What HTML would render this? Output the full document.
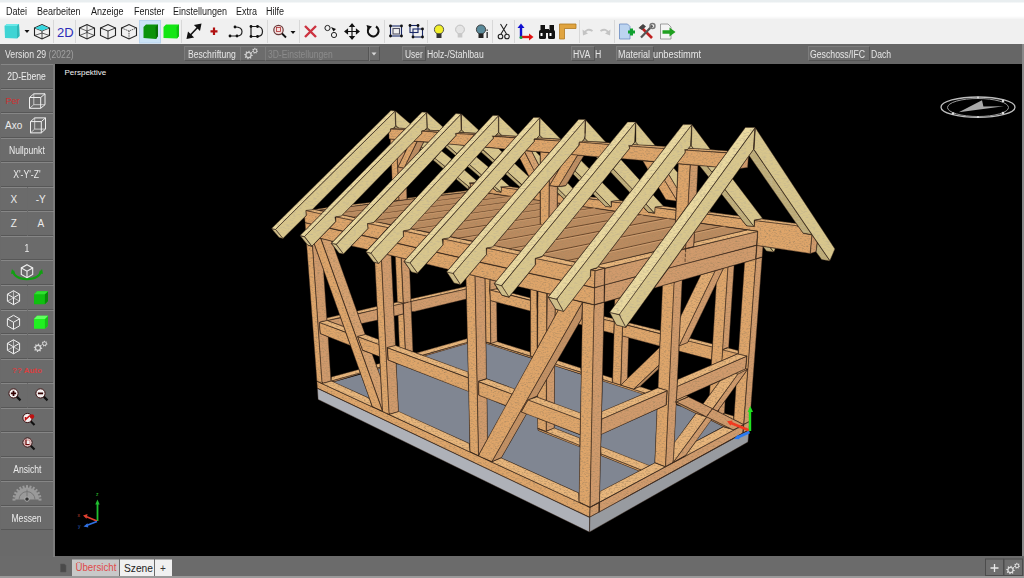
<!DOCTYPE html>
<html><head><meta charset="utf-8">
<style>
html,body{margin:0;padding:0;width:1024px;height:578px;overflow:hidden;background:#6a6a6a;font-family:"Liberation Sans",sans-serif}
.a{position:absolute;white-space:nowrap}
#menu{position:absolute;left:0;top:0;width:1024px;height:19px;background:linear-gradient(#e9eef0 0,#e9eef0 2px,#ffffff 3px,#ffffff 16px,#f3f3f3 19px)}
#menu span{position:absolute;top:5.5px;font-size:10px;line-height:12px;color:#1b1b1b;transform-origin:0 0;transform:scaleX(0.9)}
#tool{position:absolute;left:0;top:19px;width:1024px;height:25px;background:#f0f0f0}
.sep{position:absolute;top:22px;width:1px;height:20px;background:#d6d6d6}
#info{position:absolute;left:0;top:44px;width:1024px;height:20px;background:#666666}
.ib{position:absolute;top:2px;height:13px;border:1px solid #555;border-top-color:#7c7c7c;border-left-color:#7c7c7c;background:#6c6c6c;color:#e8e8e8;font-size:10px;line-height:13px;padding:0 2px}
.it{position:absolute;top:3.5px;color:#e6e6e6;font-size:10px;line-height:13px;white-space:nowrap;transform-origin:0 0}
#side{position:absolute;left:0;top:64px;width:55px;height:493px;background:#6a6a6a}
.btn{position:absolute;left:1px;width:52px;height:22.55px;border-top:1px solid #868686;border-bottom:1px solid #575757;background:#6b6b6b;color:#ececec;font-size:10px;text-align:center;line-height:23.5px}
.half{width:25.5px}
#view{position:absolute;left:55px;top:64px;width:967px;height:492px;background:#000}
#right{position:absolute;left:1022px;top:44px;width:2px;height:534px;background:#8a8a8a}
#bottom{position:absolute;left:0;top:556px;width:1024px;height:22px;background:#6b6b6b}
.tab{position:absolute;top:4px;height:16px;font-size:10px;line-height:16px;text-align:center}
</style></head><body>
<div id="menu">
<span style="left:5.5px">Datei</span><span style="left:37px">Bearbeiten</span><span style="left:91px">Anzeige</span><span style="left:134px">Fenster</span><span style="left:172.5px">Einstellungen</span><span style="left:236px">Extra</span><span style="left:266px">Hilfe</span>
</div>
<div id="tool"></div>
<svg width="1024" height="25" style="position:absolute;left:0;top:19px" viewBox="0 19 1024 25">
<g fill="#d8d8d8"><rect x="53" y="20" width="1" height="23"/><rect x="75" y="20" width="1" height="23"/><rect x="181" y="20" width="1" height="23"/><rect x="267" y="20" width="1" height="23"/><rect x="299" y="20" width="1" height="23"/><rect x="384" y="20" width="1" height="23"/><rect x="427" y="20" width="1" height="23"/><rect x="492" y="20" width="1" height="23"/><rect x="514" y="20" width="1" height="23"/><rect x="579" y="20" width="1" height="23"/><rect x="614" y="20" width="1" height="23"/></g>
<!-- cyan cube -->
<path d="M4.5 26 L7 24 L19 24 L19.5 36 L17 38.5 L5 38 Z" fill="#3fd4d4"/><path d="M4.5 26 L7 24 L19 24 L17 26 Z" fill="#6ae8e8"/><path d="M17 26 L19 24 L19.5 36 L17 38.5Z" fill="#30b8b8"/>
<path d="M24.5 30 L29.5 30 L27 33 Z" fill="#111"/>
<!-- wire cube cyan top -->
<g fill="none" stroke="#222" stroke-width="1.1"><path d="M34.5 28 L42 24.5 L49.5 28 L49.5 35.5 L42 39 L34.5 35.5 Z"/><path d="M34.5 28 L42 31 L49.5 28 M42 31 L42 39" stroke-width="0.8"/><path d="M34.5 35.5 L42 33 L49.5 35.5" stroke-width="0.7"/></g>
<path d="M35 28 L42 25 L49 28 L42 30.5Z" fill="#35d8e0"/>
<text x="57" y="36.5" font-family="Liberation Sans" font-size="13" fill="#2b2bb8">2D</text>
<g fill="none" stroke="#222" stroke-width="1.1">
<path d="M79.5 28 L87 24.5 L94.5 28 L94.5 35.5 L87 39 L79.5 35.5 Z"/><path d="M79.5 28 L87 31 L94.5 28 M87 31 L87 39 M79.5 35.5 L87 32.5 L94.5 35.5 M87 24.5 L87 32.5" stroke-width="0.7"/>
<path d="M100.5 28 L108 24.5 L115.5 28 L115.5 35.5 L108 39 L100.5 35.5 Z"/><path d="M100.5 28 L108 31 L115.5 28 M108 31 L108 39" stroke-width="0.9"/>
<path d="M121.5 28 L129 24.5 L136.5 28 L136.5 35.5 L129 39 L121.5 35.5 Z"/><path d="M121.5 28 L129 31 L136.5 28 M129 31 L129 39" stroke-width="0.9" stroke-dasharray="1.2 1"/>
</g>
<rect x="139.5" y="20.5" width="21" height="22.5" fill="#cce4f7" stroke="#b8d4ee" stroke-width="1"/>
<path d="M143.5 27 L146 24.5 L158 24.5 L158 36 L156 39 L143.5 38 Z" fill="#0b930b"/><path d="M155.5 27 L158 24.5 L158 36 L156 39Z" fill="#087008"/>
<path d="M163.5 27 L166 24.5 L179 24.5 L179 36 L177 38.5 L163.5 38 Z" fill="#14e614"/><path d="M176.5 27 L179 24.5 L179 36 L177 38.5Z" fill="#10c010"/>
<!-- diag arrow -->
<g stroke="#111" stroke-width="1.6" fill="#111"><path d="M189.5 36 L198.5 26.5" fill="none"/><path d="M187.5 38 L188.5 33 L192.5 37Z"/><path d="M200.5 24.5 L195.5 25.5 L199.5 29.5Z"/></g>
<path d="M214 27.5 V35 M210.5 31.3 H217.5" stroke="#b01010" stroke-width="2.2"/>
<g stroke="#222" stroke-width="1.2" fill="none"><path d="M230 36 H237 M235 27 Q242 27 242 31.5 Q242 36 237 36"/><path d="M251 26.5 V36.5 M251 26.5 H257 Q262.5 26.5 262.5 31.5 Q262.5 36.5 257 36.5 H251"/></g>
<g fill="#111"><circle cx="230" cy="36" r="1.4"/><circle cx="237" cy="36" r="1.4"/><circle cx="235" cy="27" r="1.4"/><circle cx="251" cy="26.5" r="1.4"/><circle cx="257.5" cy="26.5" r="1.4"/><circle cx="251" cy="36.5" r="1.4"/><circle cx="257.5" cy="36.5" r="1.4"/></g>
<!-- zoom -->
<circle cx="278.5" cy="30" r="4.7" fill="#f4dede" stroke="#6a3a3a" stroke-width="1.2"/><path d="M282 33.5 L286 37.5" stroke="#111" stroke-width="1.8"/><rect x="276.5" y="27.5" width="4" height="4" fill="none" stroke="#b03030" stroke-width="0.8"/>
<path d="M290.5 31 L295.5 31 L293 34 Z" fill="#111"/>
<path d="M305 26 L316 37 M316 26 L305 37" stroke="#cc3340" stroke-width="2.4"/>
<g fill="none" stroke="#222" stroke-width="1"><circle cx="327.5" cy="28" r="2.6"/><circle cx="334" cy="35" r="2.6"/></g><path d="M331 27 L336 29 L333.5 31.5Z" fill="#111"/>
<g stroke="#111" stroke-width="1.2" fill="#111"><path d="M352 24.5 V38.5 M345.5 31.5 H358.5" fill="none"/><path d="M352 24 L350 26.5 H354Z M352 39 L350 36.5 H354Z M345 31.5 L347.5 29.5 V33.5Z M359 31.5 L356.5 29.5 V33.5Z"/></g>
<path d="M376 26.5 A5.3 5.3 0 1 1 368.5 28.5" fill="none" stroke="#111" stroke-width="2.2"/><path d="M366.5 25 L372 26.5 L368 30.5Z" fill="#111"/>
<g fill="none" stroke="#1b2a6a" stroke-width="1.1"><rect x="390.5" y="26" width="11" height="10"/><rect x="393" y="28.5" width="6.5" height="5.5" stroke="#556"/></g><g fill="#111"><circle cx="390.5" cy="26" r="1.4"/><circle cx="401.5" cy="26" r="1.4"/><circle cx="390.5" cy="36" r="1.4"/><circle cx="401.5" cy="36" r="1.4"/></g>
<g fill="none" stroke="#1b2a6a" stroke-width="1.1"><rect x="410" y="25.5" width="8" height="7"/><rect x="413" y="29" width="9.5" height="8"/></g><g fill="#111"><circle cx="410" cy="25.5" r="1.4"/><circle cx="418" cy="25.5" r="1.4"/><circle cx="413" cy="37" r="1.4"/><circle cx="422.5" cy="37" r="1.4"/><circle cx="422.5" cy="29" r="1.4"/></g>
<!-- bulbs -->
<circle cx="439" cy="29.5" r="4.6" fill="#f2f02a" stroke="#444" stroke-width="0.9"/><rect x="436.5" y="33.5" width="5" height="4.5" fill="#333"/>
<circle cx="460" cy="29.5" r="4.4" fill="#e4e4e4" stroke="#bbb" stroke-width="0.9"/><rect x="457.7" y="33.5" width="4.6" height="4" fill="#c8c8c8"/>
<circle cx="481" cy="29.5" r="4.6" fill="#5a8a9a" stroke="#333" stroke-width="0.9"/><rect x="478.5" y="33.5" width="5" height="4.5" fill="#222"/><rect x="486.5" y="32" width="1.3" height="6" fill="#222"/><rect x="486.5" y="29.5" width="1.3" height="1.3" fill="#222"/>
<!-- scissors -->
<g fill="none" stroke="#222" stroke-width="1.1"><path d="M500.5 24 L506.5 34 M507 24 L501 34"/><circle cx="500.5" cy="36.5" r="2.3"/><circle cx="507" cy="36.5" r="2.3"/></g>
<!-- axes -->
<path d="M521 37.5 V26" stroke="#1010d0" stroke-width="2.4"/><path d="M521 23.5 L517.5 28 H524.5Z" fill="#1010d0"/><path d="M521 37 H530" stroke="#e01010" stroke-width="2.4"/><path d="M533.5 37 L529 33.5 V40.5Z" fill="#e01010"/><circle cx="521" cy="37.5" r="1.5" fill="#10a040"/>
<!-- binoculars -->
<g fill="#111"><rect x="539" y="30" width="7" height="9" rx="1.5"/><rect x="548" y="30" width="7" height="9" rx="1.5"/><rect x="540.5" y="25" width="4.5" height="6"/><rect x="549.5" y="25" width="4.5" height="6"/><rect x="545" y="29" width="4" height="4"/></g><g fill="#fff"><rect x="540.5" y="33" width="2" height="3"/><rect x="549.5" y="33" width="2" height="3"/></g>
<!-- ruler -->
<path d="M559.5 24 H576 V28.5 H564.5 V39 H559.5 Z" fill="#e0a440" stroke="#b07820" stroke-width="0.8"/>
<!-- undo/redo gray -->
<path d="M584 33.5 Q587 27.5 592.5 31" fill="none" stroke="#c4c4c4" stroke-width="2"/><path d="M582.5 29.5 L583 35.5 L588 33.5Z" fill="#c4c4c4"/>
<path d="M609 33.5 Q606 27.5 600.5 31" fill="none" stroke="#c4c4c4" stroke-width="2"/><path d="M610.5 29.5 L610 35.5 L605 33.5Z" fill="#c4c4c4"/>
<!-- doc+ -->
<path d="M619.5 24 H627.5 L630 26.5 V39 H619.5Z" fill="#bcd4f0" stroke="#6a8ac0" stroke-width="0.8"/><path d="M628 32 H635 M631.5 28.5 V35.5" stroke="#10a030" stroke-width="3"/>
<!-- tools -->
<path d="M640.5 26.5 L652 38" stroke="#c02020" stroke-width="2.6"/><path d="M652.5 25.5 L641 37.5" stroke="#555" stroke-width="2.2"/><path d="M638.5 28 L643 24 L646 26.5 L642 30Z" fill="#444"/><circle cx="652.5" cy="26" r="2.5" fill="none" stroke="#777" stroke-width="1.4"/>
<!-- doc arrow -->
<path d="M660.5 24 H668 L671 27 V39 H660.5Z" fill="#f4f4f4" stroke="#888" stroke-width="0.8"/><path d="M662.5 32 H670" stroke="#20a020" stroke-width="3.5"/><path d="M675.5 32 L669.5 27.5 V36.5Z" fill="#20a020"/>
</svg>

<div id="info">
<div class="ib" style="left:184px;width:51px"></div>
<div class="ib" style="left:240px;width:20px"></div>
<div class="ib" style="left:265px;width:109px"></div><div style="position:absolute;left:368px;top:3px;width:1px;height:14px;background:#555"></div><div style="position:absolute;left:369px;top:3px;width:1px;height:14px;background:#7a7a7a"></div>
<svg style="position:absolute;left:370px;top:7px" width="8" height="6"><path d="M1.5 1.5 H6.5 L4 4.5Z" fill="#d8d8d8"/></svg>
<svg style="position:absolute;left:243px;top:2px" width="20" height="16"><path d="M9.79 9.21 9.67 10.04 8.30 10.32 7.99 10.84 8.39 12.19 7.71 12.69 6.54 11.92 5.95 12.06 5.29 13.29 4.46 13.17 4.18 11.80 3.66 11.49 2.31 11.89 1.81 11.21 2.58 10.04 2.44 9.45 1.21 8.79 1.33 7.96 2.70 7.68 3.01 7.16 2.61 5.81 3.29 5.31 4.46 6.08 5.05 5.94 5.71 4.71 6.54 4.83 6.82 6.20 7.34 6.51 8.69 6.11 9.19 6.79 8.42 7.96 8.56 8.55Z" fill="#cfcfcf"/><circle cx="5.50" cy="9.00" r="1.94" fill="#6c6c6c"/><path d="M15.00 4.97 14.88 5.63 13.89 5.84 13.61 6.24 13.74 7.25 13.15 7.57 12.36 6.93 11.88 6.96 11.17 7.68 10.55 7.43 10.56 6.41 10.24 6.05 9.23 5.95 9.04 5.30 9.84 4.68 9.92 4.20 9.37 3.35 9.76 2.80 10.75 3.04 11.17 2.80 11.50 1.84 12.17 1.80 12.60 2.72 13.04 2.91 14.00 2.56 14.45 3.06 14.00 3.97 14.13 4.44Z" fill="#cfcfcf"/><circle cx="12.00" cy="4.80" r="1.35" fill="#6c6c6c"/></svg>
<div class="ib" style="left:402px;width:18px"></div>
<div class="ib" style="left:571px;width:18px"></div>
<div class="ib" style="left:616px;width:32px"></div>
<div class="ib" style="left:808px;width:56px"></div>
<span class="it" style="left:5px;transform:scaleX(0.87)">Version 29 <span style="color:#a0a0a0">(2022)</span></span>
<span class="it" style="left:188px;transform:scaleX(0.86)">Beschriftung</span>
<span class="it" style="left:268px;transform:scaleX(0.85);color:#8c8c8c">3D-Einstellungen</span>
<span class="it" style="left:405px;transform:scaleX(0.84)">User</span>
<span class="it" style="left:427px;transform:scaleX(0.865)">Holz-/Stahlbau</span>
<span class="it" style="left:573px;transform:scaleX(0.87)">HVA</span>
<span class="it" style="left:594.5px;transform:scaleX(0.87)">H</span>
<span class="it" style="left:618px;transform:scaleX(0.9)">Material</span>
<span class="it" style="left:653px;transform:scaleX(0.93)">unbestimmt</span>
<span class="it" style="left:810px;transform:scaleX(0.87)">Geschoss/IFC</span>
<span class="it" style="left:870.5px;transform:scaleX(0.86)">Dach</span>
</div>
<div id="side"><div class="btn" style="top:0.0px"><span style="display:inline-block;transform:scaleX(0.86)">2D-Ebene</span></div><div class="btn" style="top:24.6px"><span style="display:inline-block;transform:scaleX(0.86)"></span></div><div class="btn" style="top:49.1px"><span style="display:inline-block;transform:scaleX(0.86)"></span></div><div class="btn" style="top:73.7px"><span style="display:inline-block;transform:scaleX(0.86)">Nullpunkt</span></div><div class="btn" style="top:98.2px"><span style="display:inline-block;transform:scaleX(0.86)">X'-Y'-Z'</span></div><div class="btn half" style="top:122.8px;left:1px">X</div><div class="btn half" style="top:122.8px;left:28px">-Y</div><div class="btn half" style="top:147.3px;left:1px">Z</div><div class="btn half" style="top:147.3px;left:28px">A</div><div class="btn" style="top:171.8px"><span style="display:inline-block;transform:scaleX(0.86)">1</span></div><div class="btn" style="top:196.4px"><span style="display:inline-block;transform:scaleX(0.86)"></span></div><div class="btn half" style="top:221.0px;left:1px"></div><div class="btn half" style="top:221.0px;left:28px"></div><div class="btn half" style="top:245.5px;left:1px"></div><div class="btn half" style="top:245.5px;left:28px"></div><div class="btn half" style="top:270.1px;left:1px"></div><div class="btn half" style="top:270.1px;left:28px"></div><div class="btn" style="top:294.6px"><span style="display:inline-block;transform:scaleX(0.86)"></span></div><div class="btn half" style="top:319.2px;left:1px"></div><div class="btn half" style="top:319.2px;left:28px"></div><div class="btn" style="top:343.7px"><span style="display:inline-block;transform:scaleX(0.86)"></span></div><div class="btn" style="top:368.2px"><span style="display:inline-block;transform:scaleX(0.86)"></span></div><div class="btn" style="top:392.8px"><span style="display:inline-block;transform:scaleX(0.86)">Ansicht</span></div><div class="btn" style="top:417.4px"><span style="display:inline-block;transform:scaleX(0.86)"></span></div><div class="btn" style="top:441.9px"><span style="display:inline-block;transform:scaleX(0.86)">Messen</span></div><svg width="56" height="493" viewBox="0 64 56 493" style="position:absolute;left:0;top:0"><text x="5.5" y="103.8" font-size="9" fill="#d03030" font-family="Liberation Sans">Per</text><g fill="none" stroke="#f0f0f0" stroke-width="1.00"><path d="M29.5 97.5H40.7V108.3H29.5Z"/><path d="M29.5 97.5L33.8 93.8H45.0L40.7 97.5 M45.0 93.8L45.0 93.8V104.7L40.7 108.3"/><path d="M33.8 93.8V104.7H45.0 M33.8 104.7L29.5 108.3" stroke-width="0.70"/></g><text x="5" y="128.9" font-size="10" fill="#ececec" font-family="Liberation Sans">Axo</text><g fill="none" stroke="#f0f0f0" stroke-width="1.00"><path d="M30.5 121.6H41.3V132.9H30.5Z"/><path d="M30.5 121.6L34.7 117.9H45.5L41.3 121.6 M45.5 117.9L45.5 117.9V129.1L41.3 132.9"/><path d="M34.7 117.9V129.1H45.5 M34.7 129.1L30.5 132.9" stroke-width="0.70"/></g><path d="M13 270.7 Q14 278.7 27 279.2 Q40 278.7 41 270.7" fill="none" stroke="#10a010" stroke-width="2.2"/><path d="M12 268.7 L14.5 273.7 L11 273.7 Z M42 268.7 L39.5 273.7 L43 273.7 Z" fill="#10a010"/><g fill="none" stroke="#f0f0f0" stroke-width="1.10"><path d="M27.0 264.7L32.7 267.9L32.7 274.4L27.0 277.7L21.3 274.4L21.3 267.9Z"/><path d="M21.3 267.9L27.0 271.2L32.7 267.9 M27.0 271.2V277.7"/></g><g fill="none" stroke="#f0f0f0" stroke-width="1.00"><path d="M13.5 290.7L19.6 294.2L19.6 301.2L13.5 304.7L7.4 301.2L7.4 294.2Z"/><path d="M7.4 294.2L13.5 297.7L19.6 294.2 M13.5 297.7V304.7"/><path d="M13.5 290.7V297.8 M7.4 301.2L13.5 297.8L19.6 301.2" stroke-width="0.60"/></g><path d="M34.0 294.3L37.1 291.2H48.0V301.1L44.9 304.2H34.0Z" fill="#10c010"/><path d="M44.9 294.3L48.0 291.2V301.1L44.9 304.2Z" fill="#0a8a0a"/><path d="M34.0 294.3L37.1 291.2H48.0L44.9 294.3Z" fill="#30e030"/><g fill="none" stroke="#f0f0f0" stroke-width="1.00"><path d="M13.5 315.3L19.6 318.8L19.6 325.8L13.5 329.3L7.4 325.8L7.4 318.8Z"/><path d="M7.4 318.8L13.5 322.3L19.6 318.8 M13.5 322.3V329.3"/></g><path d="M34.0 318.9L37.1 315.8H48.0V325.7L44.9 328.8H34.0Z" fill="#20f020"/><path d="M44.9 318.9L48.0 315.8V325.7L44.9 328.8Z" fill="#18c018"/><path d="M34.0 318.9L37.1 315.8H48.0L44.9 318.9Z" fill="#60ff60"/><g fill="none" stroke="#f0f0f0" stroke-width="1.00"><path d="M13.5 339.8L19.6 343.3L19.6 350.3L13.5 353.8L7.4 350.3L7.4 343.3Z"/><path d="M7.4 343.3L13.5 346.8L19.6 343.3 M13.5 346.8V353.8"/><path d="M13.5 339.8V346.9 M7.4 350.3L13.5 346.9L19.6 350.3" stroke-width="0.60"/></g><path d="M42.29 348.04 42.17 348.87 40.80 349.15 40.49 349.67 40.89 351.01 40.21 351.51 39.04 350.74 38.45 350.89 37.79 352.12 36.96 352.00 36.68 350.62 36.16 350.31 34.81 350.71 34.31 350.04 35.08 348.87 34.94 348.28 33.71 347.61 33.83 346.78 35.20 346.50 35.51 345.98 35.11 344.64 35.79 344.14 36.96 344.91 37.55 344.76 38.21 343.53 39.04 343.65 39.32 345.03 39.84 345.34 41.19 344.94 41.69 345.61 40.92 346.78 41.06 347.37Z" fill="#d4d4d4"/><circle cx="38.00" cy="347.82" r="1.94" fill="#6b6b6b"/><path d="M47.50 343.79 47.38 344.46 46.39 344.67 46.11 345.06 46.24 346.07 45.65 346.40 44.86 345.75 44.38 345.78 43.67 346.51 43.05 346.25 43.06 345.24 42.74 344.87 41.73 344.77 41.54 344.13 42.34 343.50 42.42 343.03 41.87 342.17 42.26 341.63 43.25 341.86 43.67 341.63 44.00 340.67 44.67 340.63 45.10 341.55 45.54 341.73 46.50 341.39 46.95 341.89 46.50 342.80 46.63 343.26Z" fill="#d4d4d4"/><circle cx="44.50" cy="343.62" r="1.35" fill="#6b6b6b"/><text x="12" y="373.4" font-size="8" fill="#d84040" font-family="Liberation Sans" font-weight="bold">?? Auto</text><path d="M16.5 396.4L20.5 400.4" stroke="#111" stroke-width="2.2"/><circle cx="13.5" cy="393.4" r="4.6" fill="#f4f0f0" stroke="#3a1010" stroke-width="1"/><path d="M10.9 393.4H16.1M13.5 390.8V396.0" stroke="#300" stroke-width="1.8"/><path d="M43.5 396.4L47.5 400.4" stroke="#111" stroke-width="2.2"/><circle cx="40.5" cy="393.4" r="4.6" fill="#f4f0f0" stroke="#3a1010" stroke-width="1"/><path d="M37.9 393.4H43.1" stroke="#300" stroke-width="1.8"/><path d="M30.5 421.0L34.5 425.0" stroke="#111" stroke-width="2.2"/><circle cx="27.5" cy="418.0" r="4.6" fill="#f4f0f0" stroke="#3a1010" stroke-width="1"/><path d="M30.0 415.5L25.5 419.5L25.5 417.0" fill="none" stroke="#c01010" stroke-width="1.5"/><circle cx="32.0" cy="416.5" r="2.2" fill="#c01010"/><path d="M30.5 445.5L34.5 449.5" stroke="#111" stroke-width="2.2"/><circle cx="27.5" cy="442.5" r="4.6" fill="#f4f0f0" stroke="#3a1010" stroke-width="1"/><path d="M26.0 439.5V444.5H29.5" fill="none" stroke="#500" stroke-width="1.2"/><rect x="25.0" y="440.0" width="5" height="5" fill="none" stroke="#a33" stroke-width="0.6"/><g fill="#9a9a9a"><path d="M15.0 499.6 A12 12 0 0 1 39.0 499.6 Z"/><rect x="13.0" y="498.1" width="2" height="3" transform="rotate(270.0 14.0 499.6)"/><rect x="13.4" y="494.8" width="2" height="3" transform="rotate(285.0 14.4 496.3)"/><rect x="14.7" y="491.6" width="2" height="3" transform="rotate(300.0 15.7 493.1)"/><rect x="16.8" y="488.9" width="2" height="3" transform="rotate(315.0 17.8 490.4)"/><rect x="19.5" y="486.9" width="2" height="3" transform="rotate(330.0 20.5 488.4)"/><rect x="22.6" y="485.6" width="2" height="3" transform="rotate(345.0 23.6 487.1)"/><rect x="26.0" y="485.1" width="2" height="3" transform="rotate(360.0 27.0 486.6)"/><rect x="29.4" y="485.6" width="2" height="3" transform="rotate(375.0 30.4 487.1)"/><rect x="32.5" y="486.9" width="2" height="3" transform="rotate(390.0 33.5 488.4)"/><rect x="35.2" y="488.9" width="2" height="3" transform="rotate(405.0 36.2 490.4)"/><rect x="37.3" y="491.6" width="2" height="3" transform="rotate(420.0 38.3 493.1)"/><rect x="38.6" y="494.8" width="2" height="3" transform="rotate(435.0 39.6 496.3)"/><rect x="39.0" y="498.1" width="2" height="3" transform="rotate(450.0 40.0 499.6)"/></g><path d="M19.0 499.6 A8 8 0 0 1 35.0 499.6" fill="none" stroke="#777" stroke-width="1"/><circle cx="27" cy="499.1" r="2.2" fill="#333" stroke="#bbb" stroke-width="0.8"/><path d="M27 496.6V489.6" stroke="#777" stroke-width="1"/></svg></div>
<div id="view"></div>
<div id="right"></div>
<div id="bottom"></div>
<svg width="1024" height="578" style="position:absolute;left:0;top:0"><defs><filter id="gr" x="0" y="0" width="100%" height="100%"><feTurbulence type="fractalNoise" baseFrequency="0.45 0.8" numOctaves="2" seed="7" result="n"/><feColorMatrix in="n" type="matrix" values="0 0 0 0 0.40 0 0 0 0 0.25 0 0 0 0 0.12 2.2 0 0 0 -0.98" result="s"/><feComposite in="s" in2="SourceAlpha" operator="in" result="s2"/><feComposite in="s2" in2="SourceGraphic" operator="atop"/></filter><filter id="gr2" x="0" y="0" width="100%" height="100%"><feTurbulence type="fractalNoise" baseFrequency="0.3 0.7" numOctaves="2" seed="11" result="n"/><feColorMatrix in="n" type="matrix" values="0 0 0 0 0.55 0 0 0 0 0.47 0 0 0 0 0.28 2.2 0 0 0 -1.0" result="s"/><feComposite in="s" in2="SourceAlpha" operator="in" result="s2"/><feComposite in="s2" in2="SourceGraphic" operator="atop"/></filter></defs><g><path d="M749.1 430.1 589.9 517.1 589.6 531.9 747.9 442.1Z" fill="#989ba0"/><path d="M317.4 388.4 318.1 399.4 589.4 532.1 589.6 517.6Z" fill="#aeb1b8"/><path d="M749.1 429.9 623.4 498.9Z" fill="#a0a0a2"/><path d="M599.9 491.4 638.9 470.9 600.6 455.6ZM554.4 424.9 554.4 428.1 580.1 437.9 580.1 434.9ZM723.1 426.6 710.9 420.6 696.1 441.1ZM526.6 414.1 501.4 457.9 579.1 492.9 579.9 447.1 537.9 430.4 537.4 418.1ZM656.9 409.4 601.4 434.4 600.9 446.4 649.1 465.4 654.6 462.9ZM676.1 404.9 674.4 442.4 695.6 413.6 681.6 406.6ZM487.1 398.6 487.6 438.6 505.6 405.9ZM537.4 395.4 536.6 396.6 537.1 397.1ZM601.9 411.4 642.9 394.1 602.6 381.1ZM369.1 398.1 360.6 374.4 333.6 381.9ZM379.9 368.6 377.9 369.6 380.6 377.1ZM554.9 365.9 554.6 403.4 580.4 412.9 581.1 374.4ZM396.4 363.9 398.6 411.4 469.6 443.4 468.6 391.6 399.1 364.4ZM486.1 343.6 486.6 378.6 514.9 388.9 531.6 358.4ZM468.1 371.9 467.4 343.6 424.6 355.9Z" fill="#808692"/></g><g filter="url(#gr)"><path d="M598.9 502.9 590.1 507.4 589.9 516.9 598.9 512.1Z" fill="#d09a6c"/><path d="M316.9 381.4 317.4 388.1 589.6 517.1 589.9 507.6Z" fill="#dea56a"/><path d="M599.4 502.4 589.9 507.4 587.1 506.1 589.9 507.4ZM490.4 461.4 583.4 504.4 578.9 502.1 578.6 492.9 501.1 457.9 491.9 461.9ZM387.1 413.6 469.9 451.9 469.1 443.4 398.9 411.6 389.1 414.6ZM320.6 382.9 373.6 407.4 371.9 406.4 369.4 398.9 367.4 397.4 331.4 381.1 322.1 383.6Z" fill="#e8b67c"/><path d="M749.6 421.6 743.9 424.4 743.4 432.6 749.1 429.6Z" fill="#d09a6c"/><path d="M676.1 404.4 680.6 406.1ZM602.6 379.4 602.9 381.1 642.4 393.9 644.9 393.1ZM554.9 365.1 555.4 365.9 581.1 374.1 581.1 372.4 555.4 364.1ZM486.1 342.4 486.4 343.6 531.4 358.1 532.4 357.1Z" fill="#dea56a"/><path d="M723.1 413.9 733.6 419.4 733.4 416.1 724.6 413.4ZM633.4 389.4 645.1 393.1 651.6 390.4 639.9 386.6ZM602.6 374.9 603.1 379.6 612.4 382.6 612.1 377.9ZM555.6 363.9 560.9 366.1 581.1 372.1 580.6 367.9 557.6 360.6ZM490.9 343.6 530.4 355.9 529.9 351.9 496.9 341.6Z" fill="#e8b67c"/><path d="M360.4 373.6 359.6 373.1 331.6 381.1 334.4 381.6ZM380.1 367.4 377.4 368.1 377.6 368.9 380.1 368.4ZM467.4 342.4 422.6 355.4 424.4 355.9 467.4 343.4Z" fill="#d09a6c"/><path d="M360.1 372.9 358.9 369.4 331.6 376.9 331.1 380.9ZM379.9 363.4 376.1 364.4 377.4 367.9 380.1 367.1ZM467.4 338.6 416.4 353.1 422.6 355.1 467.1 342.4Z" fill="#e8b67c"/><path d="M743.4 425.1 599.6 502.4 599.4 511.9 742.6 433.1Z" fill="#d09a6c"/><path d="M599.4 502.6 599.1 512.4Z" fill="#dea56a"/><path d="M673.1 462.6 665.4 466.9 654.9 462.9 599.9 491.6 599.4 502.1ZM733.9 429.9 723.4 426.9 695.9 441.4 684.9 456.4 673.6 462.4Z" fill="#e8b67c"/><path d="M604.1 285.1 594.6 288.1 594.4 304.6 603.9 301.9Z" fill="#d09a6c"/><path d="M572.9 299.6 594.1 304.6 594.4 288.1 583.6 285.6ZM518.1 286.4 550.4 294.1 561.1 280.6 528.6 273.4ZM469.6 274.4 496.4 280.9 506.6 268.4 479.6 262.4ZM426.4 263.9 448.6 269.4 458.6 257.6 436.4 252.4ZM387.1 254.4 406.1 258.9 416.1 247.9 396.9 243.6ZM351.6 245.9 367.6 249.6 377.4 239.1 361.4 235.6ZM342.6 231.4 329.4 228.4 319.9 238.1 333.1 241.4ZM311.1 224.1 305.1 222.9 305.6 229.9Z" fill="#dea56a"/><path d="M762.9 246.4 757.1 245.6 756.1 258.6 762.1 256.9Z" fill="#d09a6c"/><path d="M635.4 276.9 604.9 284.9 604.4 302.1 620.1 297.6ZM756.6 245.4 668.9 268.1 654.4 287.9 755.4 259.1Z" fill="#d09a6c"/><path d="M314.1 244.1 312.6 245.6 321.9 381.6 322.9 383.1 330.9 380.9 328.1 336.9 320.1 333.6 319.1 322.9 320.1 321.9 326.9 320.4 323.4 269.4Z" fill="#d09a6c"/><path d="M306.6 243.9 316.9 380.9 322.1 383.4 312.4 245.9 311.6 246.4 308.1 245.4Z" fill="#dea56a"/><path d="M386.9 254.6 381.6 260.4 388.9 411.9 389.6 414.1 398.4 411.4 396.1 363.4 387.9 359.9 386.9 347.6 395.4 345.4 391.1 255.6Z" fill="#d09a6c"/><path d="M381.4 260.6 378.6 263.6 374.9 262.4 382.4 408.9 382.6 411.4 389.1 414.4Z" fill="#dea56a"/><path d="M475.1 276.1 478.6 455.1 487.4 439.1 486.9 398.6 478.6 395.1 478.4 386.1 478.6 381.1 486.4 378.6 484.9 278.4Z" fill="#d09a6c"/><path d="M469.4 274.6 466.1 279.1 470.1 451.6 478.4 455.6 474.9 276.1Z" fill="#dea56a"/><path d="M604.1 302.4 594.6 304.9 593.9 310.9 590.1 506.9 599.4 501.9Z" fill="#d09a6c"/><path d="M582.6 302.4 579.1 502.1 589.9 507.1 594.1 305.1Z" fill="#dea56a"/><path d="M490.4 300.6 490.9 343.4 497.1 341.4 496.6 302.4ZM490.1 279.9 490.1 289.9 496.6 288.9 496.4 287.1 494.1 283.6 496.1 281.1Z" fill="#d09a6c"/><path d="M485.1 278.6 486.1 341.9 490.6 343.1 490.1 297.6 489.4 290.1 489.9 279.6Z" fill="#dea56a"/><path d="M537.4 313.1 537.4 348.1ZM537.1 291.1 537.1 308.4Z" fill="#d09a6c"/><path d="M530.6 289.6 530.6 356.1 532.6 356.6 537.1 348.6 536.9 291.1Z" fill="#dea56a"/><path d="M622.4 336.1 620.9 384.9 627.4 378.6 628.6 337.6Z" fill="#d09a6c"/><path d="M614.4 321.6 612.6 382.4 620.6 384.9 622.4 326.6 616.4 325.1ZM620.1 297.9 614.9 299.4 614.6 305.4Z" fill="#dea56a"/><path d="M725.1 400.9 719.1 409.1 718.6 411.9 722.6 413.9 724.4 413.1ZM734.1 265.4 728.4 266.9 727.9 268.1 722.6 349.6 727.1 347.6 728.6 347.9Z" fill="#d09a6c"/><path d="M718.6 409.9 717.6 411.4 718.1 411.6ZM719.9 380.9 710.1 385.4 709.6 394.9ZM727.9 267.1 723.4 268.6 716.4 283.1 711.4 365.1 721.9 360.4Z" fill="#dea56a"/><path d="M762.1 257.4 756.4 258.9 755.9 260.6 743.9 424.1 749.4 421.4 749.9 419.6Z" fill="#d09a6c"/><path d="M747.6 369.6 736.1 385.6 733.9 419.4 743.6 424.4ZM755.9 259.1 744.6 262.6 738.4 353.9 747.1 356.1 745.9 368.6 747.1 369.1 747.9 368.6Z" fill="#dea56a"/><path d="M401.4 258.1 403.4 302.9 404.4 303.1 403.4 303.4 405.4 349.1 412.9 351.6 410.9 301.9 409.9 301.6 410.9 301.4 409.6 269.4 403.9 261.4 405.9 259.1ZM404.1 302.9 405.6 302.9ZM406.4 302.4 407.9 302.4Z" fill="#d09a6c"/><path d="M403.1 303.6 403.6 313.9 398.1 315.4 399.4 346.9 405.1 348.9ZM395.4 256.6 397.4 301.9 403.1 303.1 401.1 258.1Z" fill="#dea56a"/><path d="M682.1 280.1 674.4 282.4 673.9 284.9 665.6 466.4 672.6 462.6 673.4 459.9 676.1 404.1 675.6 401.9 676.4 399.1Z" fill="#d09a6c"/><path d="M674.1 282.4 662.6 285.6 658.1 387.6 667.4 390.6 666.4 404.9 657.1 409.4 654.9 462.6 665.4 466.6Z" fill="#dea56a"/><path d="M521.4 411.9 580.1 434.6 580.4 419.6 528.1 400.1ZM478.6 381.9 479.1 395.4 505.9 405.4 511.9 394.1ZM387.6 347.9 388.4 360.1 468.6 391.4 468.1 377.9ZM357.9 336.9 362.6 350.1 379.6 356.6 378.9 344.6ZM319.4 322.6 320.4 333.6 350.4 345.4 345.6 332.4Z" fill="#dea56a"/><path d="M528.1 399.9 580.4 419.4 580.4 413.1 536.9 397.1ZM478.6 381.4 512.1 394.1 514.9 389.1 486.9 378.9ZM387.1 347.6 468.1 377.6 468.1 372.1 395.6 345.6ZM357.6 336.4 378.9 344.4 378.6 339.4 365.4 334.6ZM319.4 322.4 345.6 332.1 343.6 326.6 327.1 320.6Z" fill="#e8b67c"/><path d="M721.9 360.6 737.9 353.6 722.9 349.9ZM679.1 346.1 679.1 351.1 711.4 359.6 712.1 347.1 689.1 341.1 687.6 342.6ZM622.6 326.9 622.4 335.9 659.6 345.9 660.4 333.9 627.6 325.4 625.9 327.6ZM604.1 319.4 603.6 330.9 613.6 333.4 614.1 321.9ZM582.1 317.9 578.6 324.1 581.9 324.9ZM555.4 309.1 555.1 315.6 558.1 310.4ZM537.4 302.6 537.6 313.1ZM490.1 290.1 490.4 300.4 530.4 311.1 530.4 300.4 510.9 295.4 509.1 297.4 501.9 295.4 499.9 292.6Z" fill="#dea56a"/><path d="M722.4 349.9 738.1 353.9 737.9 350.4 727.9 347.9ZM688.4 341.1 712.4 346.9 712.4 343.9 690.6 338.4 689.6 338.6ZM627.6 325.1 660.4 333.6 660.1 330.6 629.6 322.9ZM604.1 316.4 603.9 319.4 614.1 321.6 612.6 318.6ZM510.9 295.1 530.4 300.1 530.4 297.9 513.4 293.4 512.4 293.4ZM490.6 290.1 499.9 292.4 498.1 289.6 495.9 288.9Z" fill="#e8b67c"/><path d="M343.6 326.4 340.6 317.9 327.6 320.6ZM377.1 309.4 357.9 313.9 361.4 323.6 377.6 320.1ZM402.9 303.6 393.6 305.6 394.1 316.1 403.4 313.9ZM466.1 289.1 411.1 301.6 411.4 311.4 414.6 311.4 466.1 299.1Z" fill="#d09a6c"/><path d="M340.4 317.4 339.6 315.1 326.9 317.9 327.1 320.4ZM377.1 307.4 376.4 306.6 357.6 310.9 357.1 311.6 358.1 313.6 376.9 309.4ZM393.6 305.4 409.6 301.9 403.1 303.4 398.4 301.9 393.6 302.9ZM466.1 286.6 410.9 298.9 411.1 301.4 410.1 301.6 465.9 289.1Z" fill="#e8b67c"/><path d="M666.9 391.1 601.9 419.1 601.1 434.4 665.9 405.1ZM746.6 356.4 677.4 386.4 676.4 400.1 745.4 368.9Z" fill="#d09a6c"/><path d="M667.1 390.6 657.9 387.9 601.9 411.6 601.6 419.1ZM746.9 356.1 737.6 354.1 677.9 379.4 677.1 386.4Z" fill="#e8b67c"/><path d="M321.1 238.6 382.4 410.1 380.6 377.4 372.1 353.9 362.6 350.4 357.4 336.4 365.1 334.4 333.6 246.4 331.1 243.4 332.1 242.1 330.9 240.9Z" fill="#d6a170"/><path d="M319.6 238.4 314.4 243.9 372.4 406.6 382.4 411.1 320.6 238.4Z" fill="#dea56a"/><path d="M582.4 302.9 492.1 461.4 501.4 457.6 526.4 414.1 521.1 411.9 527.9 399.9 536.9 396.1 581.6 318.6Z" fill="#c39064"/><path d="M582.4 302.4 572.6 299.9 563.6 311.6 558.4 310.1 479.6 453.4 478.9 455.9 491.9 461.6Z" fill="#dea56a"/><path d="M658.9 365.4 634.4 388.6 639.9 386.4 658.6 368.9Z" fill="#ba8a5f"/><path d="M659.6 347.4 620.9 385.1 633.6 389.1 658.9 365.1Z" fill="#dea56a"/><path d="M676.6 401.9 733.1 429.9 743.4 424.6 712.6 408.9 712.1 409.4 712.1 408.6 688.6 396.9ZM707.9 414.6 707.4 415.9ZM708.6 413.6 708.1 414.9ZM709.9 411.9 709.4 413.1ZM710.6 410.9 710.1 412.1ZM711.9 409.1 711.4 410.4Z" fill="#d09a6c"/><path d="M711.1 420.4 723.4 426.6 730.4 428.6 712.1 419.6ZM676.4 401.9 676.6 404.1 695.9 413.4 703.9 415.6Z" fill="#af8256"/><path d="M688.1 396.6 685.9 395.9 676.6 400.1 675.9 401.9Z" fill="#e8b67c"/><path d="M711.6 419.4 706.9 417.1 673.6 462.1 685.9 455.1ZM747.4 369.4 737.9 374.1 712.9 408.9 717.6 411.1Z" fill="#d09a6c"/><path d="M737.4 373.6 735.6 373.6 719.9 381.1 703.1 403.9 712.4 408.6 706.1 416.9 696.1 413.4 674.4 442.6 673.1 462.4 737.6 374.4Z" fill="#e6b278"/><path d="M747.1 369.4 745.6 368.9 735.6 373.4 738.1 373.9Z" fill="#e8b67c"/><path d="M723.4 268.4 715.1 271.1 679.1 345.9 687.6 342.4Z" fill="#d09a6c"/><path d="M715.1 270.9 700.9 274.9 681.4 314.9 680.4 318.1 678.9 345.9Z" fill="#e2ac72"/><path d="M600.9 453.9 601.1 455.6 639.1 470.9 640.9 469.9ZM537.6 428.6 538.4 430.4 579.9 446.9 579.1 445.1Z" fill="#dea56a"/><path d="M600.9 446.6 601.1 453.9 641.1 469.9 649.4 465.6ZM537.6 428.4 579.9 445.4 579.6 438.1 554.1 428.1 546.1 431.6Z" fill="#e8b67c"/><path d="M546.4 421.6 546.4 431.1 554.1 427.9 554.1 424.6ZM554.6 365.6 546.6 379.4 546.6 400.6 554.4 403.4ZM547.4 293.6 546.9 330.9 554.9 316.1 555.1 310.6 554.9 308.1 548.1 297.1 550.4 294.4Z" fill="#d09a6c"/><path d="M537.6 418.4 537.6 428.1 546.1 431.4 546.1 421.6ZM546.4 379.9 537.6 394.9 537.9 397.4 546.1 400.4ZM538.1 291.4 537.6 347.6 546.6 331.1 546.6 293.6Z" fill="#dea56a"/><path d="M604.6 268.4 595.1 270.9 594.6 287.6 604.1 284.9Z" fill="#d09a6c"/><path d="M590.9 270.1 590.6 276.4 583.9 285.1 594.4 287.6 594.9 270.9ZM528.9 272.9 561.4 280.1 572.4 266.1 535.6 258.6 535.6 264.6ZM480.1 261.9 507.1 267.9 518.1 254.6 486.9 248.1 486.6 254.4ZM436.6 252.1 459.1 257.1 469.9 244.6 443.4 239.1 443.1 244.9ZM397.4 243.1 416.4 247.4 426.6 236.1 403.6 230.9 403.6 236.4ZM361.9 235.1 377.9 238.6 387.9 227.6 368.6 223.6 367.9 223.9 368.1 228.6ZM329.9 227.9 343.1 230.9 352.9 220.4 335.9 216.9 335.9 221.6ZM305.1 222.4 311.4 223.9 321.4 213.9 305.9 210.6 306.4 215.6 304.6 217.4Z" fill="#dea56a"/><path d="M604.9 268.1 597.9 266.9 596.6 268.4 590.9 269.9 595.4 270.6ZM535.4 258.4 572.6 265.9 575.4 262.4 543.4 255.6 541.6 257.1ZM487.1 248.1 517.1 254.6 518.4 254.4 520.9 251.4 493.9 245.6 492.6 247.1ZM443.6 238.9 468.9 244.6 470.1 244.4 472.6 241.6 450.4 236.9 448.9 238.1ZM403.9 230.9 426.6 235.9 429.6 232.9 410.9 228.9 409.4 230.1ZM367.6 223.6 388.1 227.6 390.6 225.1 374.9 221.6 373.4 222.9ZM336.1 216.9 353.1 220.4 355.6 217.9 342.6 215.1 341.4 216.1ZM306.1 210.6 320.6 213.9 323.9 211.4 314.1 209.4Z" fill="#e8b67c"/><path d="M811.9 235.1 810.4 253.4 816.1 251.6 817.1 242.6Z" fill="#d09a6c"/><path d="M700.9 223.1 757.9 231.1 757.1 245.4 810.1 253.4 811.9 234.9 803.4 233.6 798.6 226.9 796.1 225.6 754.9 220.6 754.4 226.6 746.6 225.9 740.6 218.6 708.1 214.4 706.9 214.6ZM638.1 214.4 675.4 219.4 675.9 210.4 655.1 207.6 654.6 213.4 648.1 212.4 643.4 207.4ZM582.9 206.4 615.4 211.1 621.6 203.1 611.6 201.9 611.4 207.1 605.6 206.6 599.1 200.1 588.9 198.9ZM557.4 194.9 557.4 202.9 560.4 203.4 563.9 199.1 559.9 195.1ZM539.9 192.4 538.4 193.1 533.4 199.6 540.1 200.4ZM469.9 187.9 468.4 187.6 468.4 189.6ZM488.6 193.1 511.6 196.4 517.6 189.6 501.6 187.4 501.1 192.4 496.6 191.6 492.9 188.4ZM473.6 183.9 470.4 183.4 470.4 187.4Z" fill="#dea56a"/><path d="M754.1 220.4 797.9 225.9 796.1 223.4 761.4 218.9ZM707.4 213.9 740.9 218.6 738.9 216.1 708.9 212.1ZM654.9 207.4 675.9 210.1 675.9 207.9 662.4 206.1ZM610.9 201.6 621.9 202.9 623.1 201.1 616.9 200.6ZM589.1 198.6 598.9 199.9 596.4 197.6 590.4 196.9ZM557.4 192.9 557.4 194.6 559.4 194.9ZM500.6 187.1 517.1 189.4 519.1 187.9 508.9 186.4ZM474.6 182.6 469.4 183.1 473.9 183.6Z" fill="#e8b67c"/><path d="M694.1 242.4 747.1 229.9 700.6 223.4 694.6 231.6ZM675.4 219.6 637.9 214.6 599.9 264.4 653.9 251.6 675.4 222.6ZM325.6 209.6 320.1 210.4 324.1 211.1ZM615.1 211.4 582.6 206.6 543.1 255.4 575.6 261.9ZM368.6 204.4 350.6 206.6 342.6 214.9 355.9 217.6ZM559.9 203.4 557.4 203.1 557.4 207.1ZM540.1 200.6 532.9 199.6 494.1 245.6 521.1 250.9 542.6 224.9 540.1 224.1ZM415.1 198.6 393.9 201.4 374.9 221.4 390.9 224.6ZM511.6 196.6 488.4 193.4 450.4 236.6 472.9 241.1ZM465.6 192.6 440.9 195.6 410.6 228.6 429.9 232.4Z" fill="#ba8a5e"/><path d="M649.6 257.6 605.1 268.4 604.6 284.9 635.6 276.6ZM757.6 231.6 685.9 248.9 685.6 252.4 685.4 249.1 681.6 249.9 668.6 268.1 756.4 245.1ZM685.1 258.6 685.1 261.9ZM685.4 253.6 685.4 257.1Z" fill="#d09a6c"/><path d="M653.9 251.9 600.1 264.4 598.1 266.6 605.4 268.1 649.9 257.4ZM757.9 231.4 747.4 229.9 694.1 242.6 693.6 246.9 686.4 248.6 682.9 248.1 681.9 249.6Z" fill="#e8b67c"/><path d="M327.6 207.6 314.4 209.4 318.1 210.1 325.9 209.4ZM370.4 202.4 352.4 204.6 350.9 206.4 368.9 204.1ZM394.4 200.9 397.9 200.6 395.1 200.1ZM416.9 196.9 407.6 197.9 407.1 199.4 415.4 198.4ZM467.6 190.6 442.9 193.6 441.4 195.1 465.4 192.4Z" fill="#e8b67c"/><path d="M406.6 188.1 398.6 196.4 399.1 200.4 406.9 199.4ZM405.1 150.4 397.4 158.4 398.1 173.6 403.4 168.1 397.9 166.9 404.4 154.1Z" fill="#d09a6c"/><path d="M398.9 196.9 398.4 196.6 395.4 199.9 398.9 200.4ZM397.1 158.6 391.6 164.4 392.1 179.9 397.9 173.9ZM394.6 139.6 390.4 139.1 390.6 143.9Z" fill="#dea56a"/><path d="M694.4 232.1 685.9 243.9 685.6 248.4 693.6 246.6ZM697.9 165.4 690.4 164.9 688.1 205.1 696.6 193.6Z" fill="#d09a6c"/><path d="M685.9 244.1 683.1 248.1 685.4 248.4ZM678.4 163.9 675.6 222.1 688.1 204.6 690.1 164.9Z" fill="#dea56a"/><path d="M557.4 170.9 549.4 180.4 549.1 217.1 557.1 207.4 557.4 186.9 549.4 185.6 556.9 173.1Z" fill="#d09a6c"/><path d="M549.1 180.6 540.4 190.9 540.4 224.1 542.6 224.6 548.9 217.4ZM549.1 152.9 540.4 152.1 540.4 163.4Z" fill="#dea56a"/><path d="M423.6 142.1 417.4 141.6 404.9 166.6 418.6 152.1Z" fill="#bc8b60"/><path d="M416.9 141.4 414.1 141.4 407.4 148.1 398.1 167.1 403.6 167.9 404.6 166.9Z" fill="#dea56a"/><path d="M525.9 150.9 524.9 152.1 534.1 170.4 538.6 165.1 531.6 151.4Z" fill="#d9a472"/><path d="M524.6 152.4 519.9 158.4 529.1 176.4 534.1 170.6Z" fill="#dea56a"/><path d="M583.9 155.6 577.6 155.4 558.6 186.6 565.9 185.4Z" fill="#be8d62"/><path d="M577.6 155.1 571.1 154.6 560.6 166.9 549.6 185.6 558.6 186.4Z" fill="#dea56a"/><path d="M668.6 174.4 664.6 180.4 676.4 199.6 676.9 188.1Z" fill="#daa673"/><path d="M664.4 180.1 658.6 187.6 665.9 199.6 676.4 201.1 675.9 198.9ZM642.9 160.9 647.9 169.4 653.6 161.9Z" fill="#dea56a"/><path d="M748.4 156.6 740.1 168.4 747.6 167.4Z" fill="#d09a6c"/><path d="M677.1 163.4 716.1 166.9 726.4 152.9 685.4 150.1 685.1 153.1ZM621.4 158.6 654.4 161.4 664.1 148.6 629.6 146.1 629.6 148.6ZM571.4 154.4 598.9 156.9 608.9 144.6 579.4 142.1 579.4 144.9ZM526.1 150.6 549.6 152.6 559.6 141.1 534.4 139.4 534.4 141.4ZM485.4 147.1 505.1 148.9 514.9 137.9 493.4 136.4 493.4 138.4ZM448.4 143.9 464.6 145.4 474.4 134.6 456.4 133.4 456.1 135.6ZM414.1 141.1 428.4 142.1 437.6 132.4 421.9 130.9 421.9 133.4ZM389.1 138.9 394.9 139.4 404.4 129.6 390.6 129.1 390.6 131.1 388.9 132.9Z" fill="#dea56a"/><path d="M684.6 149.9 726.6 152.6 727.9 151.1 696.4 148.6 688.4 148.6 687.6 149.6ZM628.6 145.9 663.6 148.4 665.9 146.6 633.4 144.6 631.9 145.6ZM579.6 142.1 609.1 144.4 610.4 142.9 583.1 141.1 581.6 142.1ZM534.1 139.1 559.9 140.9 561.1 139.4 540.1 138.1ZM495.4 135.9 515.1 137.6 516.4 136.4 497.1 135.1ZM457.1 133.6 474.6 134.6 475.9 133.4 459.1 132.6ZM422.1 131.1 437.9 132.1 439.1 130.9 425.1 129.9 424.1 130.9ZM390.6 128.9 404.6 129.6 405.6 128.6 396.9 128.1Z" fill="#e8b67c"/></g><g filter="url(#gr2)"><path d="M394.9 111.4 275.6 229.4 282.9 238.4 306.1 215.6 305.9 210.4 311.9 209.9 390.4 131.1 390.4 128.9 393.1 128.4 395.6 125.9Z" fill="#d8c68c"/><path d="M271.9 228.9 279.1 237.4 283.1 238.6 275.6 229.6Z" fill="#d0be87"/><path d="M395.1 110.9 390.9 110.6 271.6 228.6 275.4 229.4Z" fill="#ead9a0"/><path d="M464.4 170.1 457.6 177.4 470.1 187.6 470.1 183.4 469.1 183.1 474.9 182.4 476.4 180.4ZM441.6 150.9 434.9 158.4 445.1 166.4 451.6 159.1ZM428.1 142.4 423.9 142.1 421.6 146.4 422.6 148.1ZM395.4 111.1 396.1 125.9 398.9 128.1 405.9 128.4 410.4 123.9Z" fill="#d8c68c"/><path d="M456.1 179.1 467.6 188.9 468.1 189.1 468.4 187.4 469.6 187.6 458.4 177.9 457.4 177.6ZM433.1 159.9 443.1 168.4 444.9 166.6 435.1 158.4ZM421.4 146.9 420.4 148.9 420.9 149.6 422.4 148.4ZM394.4 127.4 395.1 128.1 398.6 128.1 395.9 125.9Z" fill="#bcaa76"/><path d="M426.4 112.9 304.6 236.6 311.9 246.1 335.6 221.6 334.9 216.9 341.4 215.9 421.6 133.4 421.6 130.9 424.1 130.6 426.9 127.9Z" fill="#d8c68c"/><path d="M300.4 235.9 307.6 244.9 311.6 246.1 304.6 236.9Z" fill="#d0be87"/><path d="M426.6 112.4 422.1 112.1 300.1 235.6 304.4 236.6Z" fill="#ead9a0"/><path d="M501.4 178.9 494.6 186.4 501.1 192.1 501.4 187.4 500.6 186.9 509.9 186.4ZM476.4 156.9 469.6 164.6 481.6 174.9 488.4 167.1ZM447.1 145.1 456.9 153.6 464.1 146.1 463.6 145.4 449.1 144.1ZM426.9 112.6 427.4 127.9 430.4 130.4 439.4 130.6 442.9 126.9Z" fill="#d8c68c"/><path d="M493.1 188.1 496.6 191.4 500.6 191.9 494.6 186.6ZM469.4 164.6 467.6 166.4 479.9 176.9 481.4 175.1ZM445.4 147.1 455.4 155.4 456.9 153.9 447.4 145.1ZM425.4 129.6 430.1 130.4 427.1 127.9Z" fill="#bcaa76"/><path d="M460.9 114.4 336.4 244.4 343.4 253.9 367.9 228.6 367.4 223.6 373.4 222.6 455.9 135.6 455.4 133.4 458.4 133.1 461.1 130.1Z" fill="#d8c68c"/><path d="M331.6 243.6 339.1 253.1 343.6 254.1 336.1 244.4Z" fill="#d0be87"/><path d="M461.1 113.9 455.9 113.6 331.4 243.4 336.4 244.1Z" fill="#ead9a0"/><path d="M514.6 163.6 507.6 171.9 521.9 184.6 528.6 176.6ZM483.1 149.6 494.6 160.1 502.1 152.1 498.4 148.4 485.1 147.4ZM461.4 114.1 461.6 130.1 464.4 132.6 476.1 133.1 478.6 130.1Z" fill="#d8c68c"/><path d="M461.1 114.1 461.4 129.9Z" fill="#e6d49b"/><path d="M507.4 171.9 505.6 174.1 519.9 186.9 521.6 184.9ZM482.9 149.9 481.1 151.9 492.9 162.4 494.6 160.4ZM459.4 132.1 464.1 132.6 461.4 130.1Z" fill="#bcaa76"/><path d="M498.4 116.1 372.6 251.1 371.1 253.4 378.6 263.4 403.4 236.4 403.1 230.9 409.9 229.4 493.1 138.4 493.1 136.4 491.9 136.1 495.1 135.9 498.4 132.6Z" fill="#d8c68c"/><path d="M366.1 252.1 373.6 261.9 378.4 263.4 371.4 253.6Z" fill="#d0be87"/><path d="M498.6 115.6 492.9 115.4 365.9 251.9 370.9 253.1Z" fill="#ead9a0"/><path d="M567.6 182.9 565.6 185.9 557.6 186.9 558.4 189.1 565.9 196.4 572.9 188.4ZM531.9 151.4 538.9 165.1 540.1 163.6 540.1 156.1 535.6 151.6ZM498.9 115.9 498.9 132.6 501.9 135.4 516.6 136.1 517.9 134.4Z" fill="#d8c68c"/><path d="M557.4 188.1 557.4 192.6 564.1 198.9 565.9 196.6ZM496.6 134.9 501.6 135.4 498.6 132.6Z" fill="#bcaa76"/><path d="M539.6 118.1 410.1 262.9 417.6 273.1 442.9 244.9 442.1 239.1 448.9 237.9 533.1 142.6 534.1 141.4 533.9 139.1 536.6 138.6 539.4 135.4Z" fill="#d8c68c"/><path d="M404.4 261.6 411.6 271.9 417.6 273.4 410.1 263.1Z" fill="#d0be87"/><path d="M539.9 117.6 533.6 117.4 404.1 261.4 409.6 262.9Z" fill="#ead9a0"/><path d="M602.1 182.4 595.4 191.1 611.1 207.1 610.9 201.4 616.9 200.4 620.1 200.6ZM581.1 160.6 575.1 170.9 581.9 177.4 589.1 168.6ZM540.1 117.9 539.9 135.4 542.6 138.1 560.6 139.1Z" fill="#d8c68c"/><path d="M593.1 193.9 605.6 206.4 610.9 207.1 595.1 191.1ZM574.9 170.9 573.1 174.1 579.4 180.4 581.6 177.6ZM537.4 137.9 542.4 138.1 539.6 135.4Z" fill="#bcaa76"/><path d="M585.1 120.1 454.1 272.4 453.6 273.9 460.6 284.6 486.4 254.4 486.1 248.1 492.6 246.9 578.6 145.6 579.1 142.1 581.6 141.9 584.1 139.1 584.9 135.9Z" fill="#d8c68c"/><path d="M446.9 272.1 454.1 282.9 460.4 284.6 453.1 273.4Z" fill="#d0be87"/><path d="M585.4 119.6 578.6 119.4 446.6 271.9 452.6 273.4 453.9 272.6Z" fill="#ead9a0"/><path d="M653.1 194.9 646.1 204.1 654.6 213.1 655.1 206.9 663.4 206.1ZM620.9 159.4 613.4 168.9 632.4 189.4 639.6 179.9ZM585.6 119.9 585.1 138.4 587.9 141.4 605.6 142.1Z" fill="#d8c68c"/><path d="M585.4 119.9 585.1 133.4Z" fill="#e6d49b"/><path d="M645.9 204.1 643.6 207.1 648.1 212.1 654.1 212.9ZM613.1 168.9 610.6 171.9 629.9 192.6 632.4 189.1ZM596.1 156.9 597.6 158.4 598.6 157.1ZM582.9 140.9 587.6 141.4 584.9 138.4Z" fill="#bcaa76"/><path d="M635.4 122.6 502.4 284.9 501.9 286.1 508.9 296.9 535.1 265.1 535.1 258.4 542.4 256.1 629.4 148.6 629.4 146.1 628.4 145.9 631.9 145.4 634.6 142.1Z" fill="#d8c68c"/><path d="M494.6 283.6 501.9 295.1 509.1 297.1 501.9 285.9Z" fill="#d0be87"/><path d="M635.6 122.1 627.6 122.1 494.4 283.6 501.4 285.6Z" fill="#ead9a0"/><path d="M710.6 212.1 709.6 210.9 708.6 212.1ZM673.6 167.9 668.9 174.6 676.9 187.9 677.6 172.6ZM635.9 122.4 635.9 142.4 638.4 144.9 655.1 145.6Z" fill="#d8c68c"/><path d="M632.9 144.4 638.1 144.9 635.4 141.6Z" fill="#bcaa76"/><path d="M691.6 125.1 557.4 298.4 557.4 300.6 563.6 311.4 590.1 276.9 590.6 269.6 597.4 267.4 684.9 153.1 685.1 150.1 684.4 149.9 687.6 149.4 690.4 145.9Z" fill="#d8c68c"/><path d="M548.6 297.4 555.6 309.1 563.4 311.4 556.9 299.4Z" fill="#d0be87"/><path d="M691.9 124.6 683.1 124.6 548.4 297.1 556.1 299.1 557.1 298.6Z" fill="#ead9a0"/><path d="M770.4 247.6 773.9 252.1 775.4 248.4ZM732.6 178.9 725.1 189.4 754.1 226.6 754.1 220.1 762.6 218.6ZM707.4 166.4 711.9 172.1 716.1 167.1ZM692.1 124.9 691.4 145.9 693.6 148.6 710.4 149.4Z" fill="#d8c68c"/><path d="M763.1 246.4 766.4 250.9 773.6 252.1 769.9 247.4ZM724.9 189.6 721.6 194.1 745.6 224.6 747.6 225.9 753.9 226.6ZM699.4 165.6 708.6 177.1 712.1 172.4 706.9 166.1ZM688.6 148.4 693.4 148.6 690.9 145.4Z" fill="#bcaa76"/><path d="M754.9 128.4 619.6 314.1 620.6 317.6 625.6 327.1 753.4 149.6Z" fill="#d8c68c"/><path d="M609.9 312.6 616.4 324.9 625.9 327.4 619.4 314.9Z" fill="#d0be87"/><path d="M755.1 127.6 745.4 127.4 609.6 312.4 619.4 314.4Z" fill="#ead9a0"/><path d="M755.4 127.9 754.1 149.6 829.9 260.6 834.9 248.9Z" fill="#d8c68c"/><path d="M755.1 127.9 753.6 149.1Z" fill="#e6d49b"/><path d="M816.6 241.9 817.4 242.6 816.1 251.9 821.6 259.6 829.9 260.9ZM753.6 149.4 749.1 155.6 802.9 232.9 811.6 234.6Z" fill="#bcaa76"/></g><g fill="none" stroke="#3b2a1c" stroke-width="0.6" stroke-opacity="0.7"><path d="M749.1 430.1 589.9 517.1 589.6 531.9 747.9 442.1Z"/><path d="M317.4 388.4 318.1 399.4 589.4 532.1 589.6 517.6Z"/><path d="M749.1 429.9 623.4 498.9Z"/><path d="M598.9 502.9 590.1 507.4 589.9 516.9 598.9 512.1Z"/><path d="M316.9 381.4 317.4 388.1 589.6 517.1 589.9 507.6Z"/><path d="M599.4 502.4 589.9 507.4 587.1 506.1 589.9 507.4ZM490.4 461.4 583.4 504.4 578.9 502.1 578.6 492.9 501.1 457.9 491.9 461.9ZM387.1 413.6 469.9 451.9 469.1 443.4 398.9 411.6 389.1 414.6ZM320.6 382.9 373.6 407.4 371.9 406.4 369.4 398.9 367.4 397.4 331.4 381.1 322.1 383.6Z"/><path d="M749.6 421.6 743.9 424.4 743.4 432.6 749.1 429.6Z"/><path d="M676.1 404.4 680.6 406.1ZM602.6 379.4 602.9 381.1 642.4 393.9 644.9 393.1ZM554.9 365.1 555.4 365.9 581.1 374.1 581.1 372.4 555.4 364.1ZM486.1 342.4 486.4 343.6 531.4 358.1 532.4 357.1Z"/><path d="M723.1 413.9 733.6 419.4 733.4 416.1 724.6 413.4ZM633.4 389.4 645.1 393.1 651.6 390.4 639.9 386.6ZM602.6 374.9 603.1 379.6 612.4 382.6 612.1 377.9ZM555.6 363.9 560.9 366.1 581.1 372.1 580.6 367.9 557.6 360.6ZM490.9 343.6 530.4 355.9 529.9 351.9 496.9 341.6Z"/><path d="M360.4 373.6 359.6 373.1 331.6 381.1 334.4 381.6ZM380.1 367.4 377.4 368.1 377.6 368.9 380.1 368.4ZM467.4 342.4 422.6 355.4 424.4 355.9 467.4 343.4Z"/><path d="M360.1 372.9 358.9 369.4 331.6 376.9 331.1 380.9ZM379.9 363.4 376.1 364.4 377.4 367.9 380.1 367.1ZM467.4 338.6 416.4 353.1 422.6 355.1 467.1 342.4Z"/><path d="M743.4 425.1 599.6 502.4 599.4 511.9 742.6 433.1Z"/><path d="M599.4 502.6 599.1 512.4Z"/><path d="M673.1 462.6 665.4 466.9 654.9 462.9 599.9 491.6 599.4 502.1ZM733.9 429.9 723.4 426.9 695.9 441.4 684.9 456.4 673.6 462.4Z"/><path d="M604.1 285.1 594.6 288.1 594.4 304.6 603.9 301.9Z"/><path d="M572.9 299.6 594.1 304.6 594.4 288.1 583.6 285.6ZM518.1 286.4 550.4 294.1 561.1 280.6 528.6 273.4ZM469.6 274.4 496.4 280.9 506.6 268.4 479.6 262.4ZM426.4 263.9 448.6 269.4 458.6 257.6 436.4 252.4ZM387.1 254.4 406.1 258.9 416.1 247.9 396.9 243.6ZM351.6 245.9 367.6 249.6 377.4 239.1 361.4 235.6ZM342.6 231.4 329.4 228.4 319.9 238.1 333.1 241.4ZM311.1 224.1 305.1 222.9 305.6 229.9Z"/><path d="M762.9 246.4 757.1 245.6 756.1 258.6 762.1 256.9Z"/><path d="M635.4 276.9 604.9 284.9 604.4 302.1 620.1 297.6ZM756.6 245.4 668.9 268.1 654.4 287.9 755.4 259.1Z"/><path d="M314.1 244.1 312.6 245.6 321.9 381.6 322.9 383.1 330.9 380.9 328.1 336.9 320.1 333.6 319.1 322.9 320.1 321.9 326.9 320.4 323.4 269.4Z"/><path d="M306.6 243.9 316.9 380.9 322.1 383.4 312.4 245.9 311.6 246.4 308.1 245.4Z"/><path d="M386.9 254.6 381.6 260.4 388.9 411.9 389.6 414.1 398.4 411.4 396.1 363.4 387.9 359.9 386.9 347.6 395.4 345.4 391.1 255.6Z"/><path d="M381.4 260.6 378.6 263.6 374.9 262.4 382.4 408.9 382.6 411.4 389.1 414.4Z"/><path d="M475.1 276.1 478.6 455.1 487.4 439.1 486.9 398.6 478.6 395.1 478.4 386.1 478.6 381.1 486.4 378.6 484.9 278.4Z"/><path d="M469.4 274.6 466.1 279.1 470.1 451.6 478.4 455.6 474.9 276.1Z"/><path d="M604.1 302.4 594.6 304.9 593.9 310.9 590.1 506.9 599.4 501.9Z"/><path d="M582.6 302.4 579.1 502.1 589.9 507.1 594.1 305.1Z"/><path d="M490.4 300.6 490.9 343.4 497.1 341.4 496.6 302.4ZM490.1 279.9 490.1 289.9 496.6 288.9 496.4 287.1 494.1 283.6 496.1 281.1Z"/><path d="M485.1 278.6 486.1 341.9 490.6 343.1 490.1 297.6 489.4 290.1 489.9 279.6Z"/><path d="M537.4 313.1 537.4 348.1ZM537.1 291.1 537.1 308.4Z"/><path d="M530.6 289.6 530.6 356.1 532.6 356.6 537.1 348.6 536.9 291.1Z"/><path d="M622.4 336.1 620.9 384.9 627.4 378.6 628.6 337.6Z"/><path d="M614.4 321.6 612.6 382.4 620.6 384.9 622.4 326.6 616.4 325.1ZM620.1 297.9 614.9 299.4 614.6 305.4Z"/><path d="M725.1 400.9 719.1 409.1 718.6 411.9 722.6 413.9 724.4 413.1ZM734.1 265.4 728.4 266.9 727.9 268.1 722.6 349.6 727.1 347.6 728.6 347.9Z"/><path d="M718.6 409.9 717.6 411.4 718.1 411.6ZM719.9 380.9 710.1 385.4 709.6 394.9ZM727.9 267.1 723.4 268.6 716.4 283.1 711.4 365.1 721.9 360.4Z"/><path d="M762.1 257.4 756.4 258.9 755.9 260.6 743.9 424.1 749.4 421.4 749.9 419.6Z"/><path d="M747.6 369.6 736.1 385.6 733.9 419.4 743.6 424.4ZM755.9 259.1 744.6 262.6 738.4 353.9 747.1 356.1 745.9 368.6 747.1 369.1 747.9 368.6Z"/><path d="M401.4 258.1 403.4 302.9 404.4 303.1 403.4 303.4 405.4 349.1 412.9 351.6 410.9 301.9 409.9 301.6 410.9 301.4 409.6 269.4 403.9 261.4 405.9 259.1ZM404.1 302.9 405.6 302.9ZM406.4 302.4 407.9 302.4Z"/><path d="M403.1 303.6 403.6 313.9 398.1 315.4 399.4 346.9 405.1 348.9ZM395.4 256.6 397.4 301.9 403.1 303.1 401.1 258.1Z"/><path d="M682.1 280.1 674.4 282.4 673.9 284.9 665.6 466.4 672.6 462.6 673.4 459.9 676.1 404.1 675.6 401.9 676.4 399.1Z"/><path d="M674.1 282.4 662.6 285.6 658.1 387.6 667.4 390.6 666.4 404.9 657.1 409.4 654.9 462.6 665.4 466.6Z"/><path d="M521.4 411.9 580.1 434.6 580.4 419.6 528.1 400.1ZM478.6 381.9 479.1 395.4 505.9 405.4 511.9 394.1ZM387.6 347.9 388.4 360.1 468.6 391.4 468.1 377.9ZM357.9 336.9 362.6 350.1 379.6 356.6 378.9 344.6ZM319.4 322.6 320.4 333.6 350.4 345.4 345.6 332.4Z"/><path d="M528.1 399.9 580.4 419.4 580.4 413.1 536.9 397.1ZM478.6 381.4 512.1 394.1 514.9 389.1 486.9 378.9ZM387.1 347.6 468.1 377.6 468.1 372.1 395.6 345.6ZM357.6 336.4 378.9 344.4 378.6 339.4 365.4 334.6ZM319.4 322.4 345.6 332.1 343.6 326.6 327.1 320.6Z"/><path d="M721.9 360.6 737.9 353.6 722.9 349.9ZM679.1 346.1 679.1 351.1 711.4 359.6 712.1 347.1 689.1 341.1 687.6 342.6ZM622.6 326.9 622.4 335.9 659.6 345.9 660.4 333.9 627.6 325.4 625.9 327.6ZM604.1 319.4 603.6 330.9 613.6 333.4 614.1 321.9ZM582.1 317.9 578.6 324.1 581.9 324.9ZM555.4 309.1 555.1 315.6 558.1 310.4ZM537.4 302.6 537.6 313.1ZM490.1 290.1 490.4 300.4 530.4 311.1 530.4 300.4 510.9 295.4 509.1 297.4 501.9 295.4 499.9 292.6Z"/><path d="M722.4 349.9 738.1 353.9 737.9 350.4 727.9 347.9ZM688.4 341.1 712.4 346.9 712.4 343.9 690.6 338.4 689.6 338.6ZM627.6 325.1 660.4 333.6 660.1 330.6 629.6 322.9ZM604.1 316.4 603.9 319.4 614.1 321.6 612.6 318.6ZM510.9 295.1 530.4 300.1 530.4 297.9 513.4 293.4 512.4 293.4ZM490.6 290.1 499.9 292.4 498.1 289.6 495.9 288.9Z"/><path d="M343.6 326.4 340.6 317.9 327.6 320.6ZM377.1 309.4 357.9 313.9 361.4 323.6 377.6 320.1ZM402.9 303.6 393.6 305.6 394.1 316.1 403.4 313.9ZM466.1 289.1 411.1 301.6 411.4 311.4 414.6 311.4 466.1 299.1Z"/><path d="M340.4 317.4 339.6 315.1 326.9 317.9 327.1 320.4ZM377.1 307.4 376.4 306.6 357.6 310.9 357.1 311.6 358.1 313.6 376.9 309.4ZM393.6 305.4 409.6 301.9 403.1 303.4 398.4 301.9 393.6 302.9ZM466.1 286.6 410.9 298.9 411.1 301.4 410.1 301.6 465.9 289.1Z"/><path d="M666.9 391.1 601.9 419.1 601.1 434.4 665.9 405.1ZM746.6 356.4 677.4 386.4 676.4 400.1 745.4 368.9Z"/><path d="M667.1 390.6 657.9 387.9 601.9 411.6 601.6 419.1ZM746.9 356.1 737.6 354.1 677.9 379.4 677.1 386.4Z"/><path d="M321.1 238.6 382.4 410.1 380.6 377.4 372.1 353.9 362.6 350.4 357.4 336.4 365.1 334.4 333.6 246.4 331.1 243.4 332.1 242.1 330.9 240.9Z"/><path d="M319.6 238.4 314.4 243.9 372.4 406.6 382.4 411.1 320.6 238.4Z"/><path d="M582.4 302.9 492.1 461.4 501.4 457.6 526.4 414.1 521.1 411.9 527.9 399.9 536.9 396.1 581.6 318.6Z"/><path d="M582.4 302.4 572.6 299.9 563.6 311.6 558.4 310.1 479.6 453.4 478.9 455.9 491.9 461.6Z"/><path d="M658.9 365.4 634.4 388.6 639.9 386.4 658.6 368.9Z"/><path d="M659.6 347.4 620.9 385.1 633.6 389.1 658.9 365.1Z"/><path d="M676.6 401.9 733.1 429.9 743.4 424.6 712.6 408.9 712.1 409.4 712.1 408.6 688.6 396.9ZM707.9 414.6 707.4 415.9ZM708.6 413.6 708.1 414.9ZM709.9 411.9 709.4 413.1ZM710.6 410.9 710.1 412.1ZM711.9 409.1 711.4 410.4Z"/><path d="M711.1 420.4 723.4 426.6 730.4 428.6 712.1 419.6ZM676.4 401.9 676.6 404.1 695.9 413.4 703.9 415.6Z"/><path d="M688.1 396.6 685.9 395.9 676.6 400.1 675.9 401.9Z"/><path d="M711.6 419.4 706.9 417.1 673.6 462.1 685.9 455.1ZM747.4 369.4 737.9 374.1 712.9 408.9 717.6 411.1Z"/><path d="M737.4 373.6 735.6 373.6 719.9 381.1 703.1 403.9 712.4 408.6 706.1 416.9 696.1 413.4 674.4 442.6 673.1 462.4 737.6 374.4Z"/><path d="M747.1 369.4 745.6 368.9 735.6 373.4 738.1 373.9Z"/><path d="M723.4 268.4 715.1 271.1 679.1 345.9 687.6 342.4Z"/><path d="M715.1 270.9 700.9 274.9 681.4 314.9 680.4 318.1 678.9 345.9Z"/><path d="M600.9 453.9 601.1 455.6 639.1 470.9 640.9 469.9ZM537.6 428.6 538.4 430.4 579.9 446.9 579.1 445.1Z"/><path d="M600.9 446.6 601.1 453.9 641.1 469.9 649.4 465.6ZM537.6 428.4 579.9 445.4 579.6 438.1 554.1 428.1 546.1 431.6Z"/><path d="M546.4 421.6 546.4 431.1 554.1 427.9 554.1 424.6ZM554.6 365.6 546.6 379.4 546.6 400.6 554.4 403.4ZM547.4 293.6 546.9 330.9 554.9 316.1 555.1 310.6 554.9 308.1 548.1 297.1 550.4 294.4Z"/><path d="M537.6 418.4 537.6 428.1 546.1 431.4 546.1 421.6ZM546.4 379.9 537.6 394.9 537.9 397.4 546.1 400.4ZM538.1 291.4 537.6 347.6 546.6 331.1 546.6 293.6Z"/><path d="M604.6 268.4 595.1 270.9 594.6 287.6 604.1 284.9Z"/><path d="M590.9 270.1 590.6 276.4 583.9 285.1 594.4 287.6 594.9 270.9ZM528.9 272.9 561.4 280.1 572.4 266.1 535.6 258.6 535.6 264.6ZM480.1 261.9 507.1 267.9 518.1 254.6 486.9 248.1 486.6 254.4ZM436.6 252.1 459.1 257.1 469.9 244.6 443.4 239.1 443.1 244.9ZM397.4 243.1 416.4 247.4 426.6 236.1 403.6 230.9 403.6 236.4ZM361.9 235.1 377.9 238.6 387.9 227.6 368.6 223.6 367.9 223.9 368.1 228.6ZM329.9 227.9 343.1 230.9 352.9 220.4 335.9 216.9 335.9 221.6ZM305.1 222.4 311.4 223.9 321.4 213.9 305.9 210.6 306.4 215.6 304.6 217.4Z"/><path d="M604.9 268.1 597.9 266.9 596.6 268.4 590.9 269.9 595.4 270.6ZM535.4 258.4 572.6 265.9 575.4 262.4 543.4 255.6 541.6 257.1ZM487.1 248.1 517.1 254.6 518.4 254.4 520.9 251.4 493.9 245.6 492.6 247.1ZM443.6 238.9 468.9 244.6 470.1 244.4 472.6 241.6 450.4 236.9 448.9 238.1ZM403.9 230.9 426.6 235.9 429.6 232.9 410.9 228.9 409.4 230.1ZM367.6 223.6 388.1 227.6 390.6 225.1 374.9 221.6 373.4 222.9ZM336.1 216.9 353.1 220.4 355.6 217.9 342.6 215.1 341.4 216.1ZM306.1 210.6 320.6 213.9 323.9 211.4 314.1 209.4Z"/><path d="M811.9 235.1 810.4 253.4 816.1 251.6 817.1 242.6Z"/><path d="M700.9 223.1 757.9 231.1 757.1 245.4 810.1 253.4 811.9 234.9 803.4 233.6 798.6 226.9 796.1 225.6 754.9 220.6 754.4 226.6 746.6 225.9 740.6 218.6 708.1 214.4 706.9 214.6ZM638.1 214.4 675.4 219.4 675.9 210.4 655.1 207.6 654.6 213.4 648.1 212.4 643.4 207.4ZM582.9 206.4 615.4 211.1 621.6 203.1 611.6 201.9 611.4 207.1 605.6 206.6 599.1 200.1 588.9 198.9ZM557.4 194.9 557.4 202.9 560.4 203.4 563.9 199.1 559.9 195.1ZM539.9 192.4 538.4 193.1 533.4 199.6 540.1 200.4ZM469.9 187.9 468.4 187.6 468.4 189.6ZM488.6 193.1 511.6 196.4 517.6 189.6 501.6 187.4 501.1 192.4 496.6 191.6 492.9 188.4ZM473.6 183.9 470.4 183.4 470.4 187.4Z"/><path d="M754.1 220.4 797.9 225.9 796.1 223.4 761.4 218.9ZM707.4 213.9 740.9 218.6 738.9 216.1 708.9 212.1ZM654.9 207.4 675.9 210.1 675.9 207.9 662.4 206.1ZM610.9 201.6 621.9 202.9 623.1 201.1 616.9 200.6ZM589.1 198.6 598.9 199.9 596.4 197.6 590.4 196.9ZM557.4 192.9 557.4 194.6 559.4 194.9ZM500.6 187.1 517.1 189.4 519.1 187.9 508.9 186.4ZM474.6 182.6 469.4 183.1 473.9 183.6Z"/><path d="M694.1 242.4 747.1 229.9 700.6 223.4 694.6 231.6ZM675.4 219.6 637.9 214.6 599.9 264.4 653.9 251.6 675.4 222.6ZM325.6 209.6 320.1 210.4 324.1 211.1ZM615.1 211.4 582.6 206.6 543.1 255.4 575.6 261.9ZM368.6 204.4 350.6 206.6 342.6 214.9 355.9 217.6ZM559.9 203.4 557.4 203.1 557.4 207.1ZM540.1 200.6 532.9 199.6 494.1 245.6 521.1 250.9 542.6 224.9 540.1 224.1ZM415.1 198.6 393.9 201.4 374.9 221.4 390.9 224.6ZM511.6 196.6 488.4 193.4 450.4 236.6 472.9 241.1ZM465.6 192.6 440.9 195.6 410.6 228.6 429.9 232.4Z"/><path d="M649.6 257.6 605.1 268.4 604.6 284.9 635.6 276.6ZM757.6 231.6 685.9 248.9 685.6 252.4 685.4 249.1 681.6 249.9 668.6 268.1 756.4 245.1ZM685.1 258.6 685.1 261.9ZM685.4 253.6 685.4 257.1Z"/><path d="M653.9 251.9 600.1 264.4 598.1 266.6 605.4 268.1 649.9 257.4ZM757.9 231.4 747.4 229.9 694.1 242.6 693.6 246.9 686.4 248.6 682.9 248.1 681.9 249.6Z"/><path d="M327.6 207.6 314.4 209.4 318.1 210.1 325.9 209.4ZM370.4 202.4 352.4 204.6 350.9 206.4 368.9 204.1ZM394.4 200.9 397.9 200.6 395.1 200.1ZM416.9 196.9 407.6 197.9 407.1 199.4 415.4 198.4ZM467.6 190.6 442.9 193.6 441.4 195.1 465.4 192.4Z"/><path d="M406.6 188.1 398.6 196.4 399.1 200.4 406.9 199.4ZM405.1 150.4 397.4 158.4 398.1 173.6 403.4 168.1 397.9 166.9 404.4 154.1Z"/><path d="M398.9 196.9 398.4 196.6 395.4 199.9 398.9 200.4ZM397.1 158.6 391.6 164.4 392.1 179.9 397.9 173.9ZM394.6 139.6 390.4 139.1 390.6 143.9Z"/><path d="M694.4 232.1 685.9 243.9 685.6 248.4 693.6 246.6ZM697.9 165.4 690.4 164.9 688.1 205.1 696.6 193.6Z"/><path d="M685.9 244.1 683.1 248.1 685.4 248.4ZM678.4 163.9 675.6 222.1 688.1 204.6 690.1 164.9Z"/><path d="M557.4 170.9 549.4 180.4 549.1 217.1 557.1 207.4 557.4 186.9 549.4 185.6 556.9 173.1Z"/><path d="M549.1 180.6 540.4 190.9 540.4 224.1 542.6 224.6 548.9 217.4ZM549.1 152.9 540.4 152.1 540.4 163.4Z"/><path d="M423.6 142.1 417.4 141.6 404.9 166.6 418.6 152.1Z"/><path d="M416.9 141.4 414.1 141.4 407.4 148.1 398.1 167.1 403.6 167.9 404.6 166.9Z"/><path d="M525.9 150.9 524.9 152.1 534.1 170.4 538.6 165.1 531.6 151.4Z"/><path d="M524.6 152.4 519.9 158.4 529.1 176.4 534.1 170.6Z"/><path d="M583.9 155.6 577.6 155.4 558.6 186.6 565.9 185.4Z"/><path d="M577.6 155.1 571.1 154.6 560.6 166.9 549.6 185.6 558.6 186.4Z"/><path d="M668.6 174.4 664.6 180.4 676.4 199.6 676.9 188.1Z"/><path d="M664.4 180.1 658.6 187.6 665.9 199.6 676.4 201.1 675.9 198.9ZM642.9 160.9 647.9 169.4 653.6 161.9Z"/><path d="M748.4 156.6 740.1 168.4 747.6 167.4Z"/><path d="M677.1 163.4 716.1 166.9 726.4 152.9 685.4 150.1 685.1 153.1ZM621.4 158.6 654.4 161.4 664.1 148.6 629.6 146.1 629.6 148.6ZM571.4 154.4 598.9 156.9 608.9 144.6 579.4 142.1 579.4 144.9ZM526.1 150.6 549.6 152.6 559.6 141.1 534.4 139.4 534.4 141.4ZM485.4 147.1 505.1 148.9 514.9 137.9 493.4 136.4 493.4 138.4ZM448.4 143.9 464.6 145.4 474.4 134.6 456.4 133.4 456.1 135.6ZM414.1 141.1 428.4 142.1 437.6 132.4 421.9 130.9 421.9 133.4ZM389.1 138.9 394.9 139.4 404.4 129.6 390.6 129.1 390.6 131.1 388.9 132.9Z"/><path d="M684.6 149.9 726.6 152.6 727.9 151.1 696.4 148.6 688.4 148.6 687.6 149.6ZM628.6 145.9 663.6 148.4 665.9 146.6 633.4 144.6 631.9 145.6ZM579.6 142.1 609.1 144.4 610.4 142.9 583.1 141.1 581.6 142.1ZM534.1 139.1 559.9 140.9 561.1 139.4 540.1 138.1ZM495.4 135.9 515.1 137.6 516.4 136.4 497.1 135.1ZM457.1 133.6 474.6 134.6 475.9 133.4 459.1 132.6ZM422.1 131.1 437.9 132.1 439.1 130.9 425.1 129.9 424.1 130.9ZM390.6 128.9 404.6 129.6 405.6 128.6 396.9 128.1Z"/><path d="M394.9 111.4 275.6 229.4 282.9 238.4 306.1 215.6 305.9 210.4 311.9 209.9 390.4 131.1 390.4 128.9 393.1 128.4 395.6 125.9Z"/><path d="M271.9 228.9 279.1 237.4 283.1 238.6 275.6 229.6Z"/><path d="M395.1 110.9 390.9 110.6 271.6 228.6 275.4 229.4Z"/><path d="M464.4 170.1 457.6 177.4 470.1 187.6 470.1 183.4 469.1 183.1 474.9 182.4 476.4 180.4ZM441.6 150.9 434.9 158.4 445.1 166.4 451.6 159.1ZM428.1 142.4 423.9 142.1 421.6 146.4 422.6 148.1ZM395.4 111.1 396.1 125.9 398.9 128.1 405.9 128.4 410.4 123.9Z"/><path d="M456.1 179.1 467.6 188.9 468.1 189.1 468.4 187.4 469.6 187.6 458.4 177.9 457.4 177.6ZM433.1 159.9 443.1 168.4 444.9 166.6 435.1 158.4ZM421.4 146.9 420.4 148.9 420.9 149.6 422.4 148.4ZM394.4 127.4 395.1 128.1 398.6 128.1 395.9 125.9Z"/><path d="M426.4 112.9 304.6 236.6 311.9 246.1 335.6 221.6 334.9 216.9 341.4 215.9 421.6 133.4 421.6 130.9 424.1 130.6 426.9 127.9Z"/><path d="M300.4 235.9 307.6 244.9 311.6 246.1 304.6 236.9Z"/><path d="M426.6 112.4 422.1 112.1 300.1 235.6 304.4 236.6Z"/><path d="M501.4 178.9 494.6 186.4 501.1 192.1 501.4 187.4 500.6 186.9 509.9 186.4ZM476.4 156.9 469.6 164.6 481.6 174.9 488.4 167.1ZM447.1 145.1 456.9 153.6 464.1 146.1 463.6 145.4 449.1 144.1ZM426.9 112.6 427.4 127.9 430.4 130.4 439.4 130.6 442.9 126.9Z"/><path d="M493.1 188.1 496.6 191.4 500.6 191.9 494.6 186.6ZM469.4 164.6 467.6 166.4 479.9 176.9 481.4 175.1ZM445.4 147.1 455.4 155.4 456.9 153.9 447.4 145.1ZM425.4 129.6 430.1 130.4 427.1 127.9Z"/><path d="M460.9 114.4 336.4 244.4 343.4 253.9 367.9 228.6 367.4 223.6 373.4 222.6 455.9 135.6 455.4 133.4 458.4 133.1 461.1 130.1Z"/><path d="M331.6 243.6 339.1 253.1 343.6 254.1 336.1 244.4Z"/><path d="M461.1 113.9 455.9 113.6 331.4 243.4 336.4 244.1Z"/><path d="M514.6 163.6 507.6 171.9 521.9 184.6 528.6 176.6ZM483.1 149.6 494.6 160.1 502.1 152.1 498.4 148.4 485.1 147.4ZM461.4 114.1 461.6 130.1 464.4 132.6 476.1 133.1 478.6 130.1Z"/><path d="M461.1 114.1 461.4 129.9Z"/><path d="M507.4 171.9 505.6 174.1 519.9 186.9 521.6 184.9ZM482.9 149.9 481.1 151.9 492.9 162.4 494.6 160.4ZM459.4 132.1 464.1 132.6 461.4 130.1Z"/><path d="M498.4 116.1 372.6 251.1 371.1 253.4 378.6 263.4 403.4 236.4 403.1 230.9 409.9 229.4 493.1 138.4 493.1 136.4 491.9 136.1 495.1 135.9 498.4 132.6Z"/><path d="M366.1 252.1 373.6 261.9 378.4 263.4 371.4 253.6Z"/><path d="M498.6 115.6 492.9 115.4 365.9 251.9 370.9 253.1Z"/><path d="M567.6 182.9 565.6 185.9 557.6 186.9 558.4 189.1 565.9 196.4 572.9 188.4ZM531.9 151.4 538.9 165.1 540.1 163.6 540.1 156.1 535.6 151.6ZM498.9 115.9 498.9 132.6 501.9 135.4 516.6 136.1 517.9 134.4Z"/><path d="M557.4 188.1 557.4 192.6 564.1 198.9 565.9 196.6ZM496.6 134.9 501.6 135.4 498.6 132.6Z"/><path d="M539.6 118.1 410.1 262.9 417.6 273.1 442.9 244.9 442.1 239.1 448.9 237.9 533.1 142.6 534.1 141.4 533.9 139.1 536.6 138.6 539.4 135.4Z"/><path d="M404.4 261.6 411.6 271.9 417.6 273.4 410.1 263.1Z"/><path d="M539.9 117.6 533.6 117.4 404.1 261.4 409.6 262.9Z"/><path d="M602.1 182.4 595.4 191.1 611.1 207.1 610.9 201.4 616.9 200.4 620.1 200.6ZM581.1 160.6 575.1 170.9 581.9 177.4 589.1 168.6ZM540.1 117.9 539.9 135.4 542.6 138.1 560.6 139.1Z"/><path d="M593.1 193.9 605.6 206.4 610.9 207.1 595.1 191.1ZM574.9 170.9 573.1 174.1 579.4 180.4 581.6 177.6ZM537.4 137.9 542.4 138.1 539.6 135.4Z"/><path d="M585.1 120.1 454.1 272.4 453.6 273.9 460.6 284.6 486.4 254.4 486.1 248.1 492.6 246.9 578.6 145.6 579.1 142.1 581.6 141.9 584.1 139.1 584.9 135.9Z"/><path d="M446.9 272.1 454.1 282.9 460.4 284.6 453.1 273.4Z"/><path d="M585.4 119.6 578.6 119.4 446.6 271.9 452.6 273.4 453.9 272.6Z"/><path d="M653.1 194.9 646.1 204.1 654.6 213.1 655.1 206.9 663.4 206.1ZM620.9 159.4 613.4 168.9 632.4 189.4 639.6 179.9ZM585.6 119.9 585.1 138.4 587.9 141.4 605.6 142.1Z"/><path d="M585.4 119.9 585.1 133.4Z"/><path d="M645.9 204.1 643.6 207.1 648.1 212.1 654.1 212.9ZM613.1 168.9 610.6 171.9 629.9 192.6 632.4 189.1ZM596.1 156.9 597.6 158.4 598.6 157.1ZM582.9 140.9 587.6 141.4 584.9 138.4Z"/><path d="M635.4 122.6 502.4 284.9 501.9 286.1 508.9 296.9 535.1 265.1 535.1 258.4 542.4 256.1 629.4 148.6 629.4 146.1 628.4 145.9 631.9 145.4 634.6 142.1Z"/><path d="M494.6 283.6 501.9 295.1 509.1 297.1 501.9 285.9Z"/><path d="M635.6 122.1 627.6 122.1 494.4 283.6 501.4 285.6Z"/><path d="M710.6 212.1 709.6 210.9 708.6 212.1ZM673.6 167.9 668.9 174.6 676.9 187.9 677.6 172.6ZM635.9 122.4 635.9 142.4 638.4 144.9 655.1 145.6Z"/><path d="M632.9 144.4 638.1 144.9 635.4 141.6Z"/><path d="M691.6 125.1 557.4 298.4 557.4 300.6 563.6 311.4 590.1 276.9 590.6 269.6 597.4 267.4 684.9 153.1 685.1 150.1 684.4 149.9 687.6 149.4 690.4 145.9Z"/><path d="M548.6 297.4 555.6 309.1 563.4 311.4 556.9 299.4Z"/><path d="M691.9 124.6 683.1 124.6 548.4 297.1 556.1 299.1 557.1 298.6Z"/><path d="M770.4 247.6 773.9 252.1 775.4 248.4ZM732.6 178.9 725.1 189.4 754.1 226.6 754.1 220.1 762.6 218.6ZM707.4 166.4 711.9 172.1 716.1 167.1ZM692.1 124.9 691.4 145.9 693.6 148.6 710.4 149.4Z"/><path d="M763.1 246.4 766.4 250.9 773.6 252.1 769.9 247.4ZM724.9 189.6 721.6 194.1 745.6 224.6 747.6 225.9 753.9 226.6ZM699.4 165.6 708.6 177.1 712.1 172.4 706.9 166.1ZM688.6 148.4 693.4 148.6 690.9 145.4Z"/><path d="M754.9 128.4 619.6 314.1 620.6 317.6 625.6 327.1 753.4 149.6Z"/><path d="M609.9 312.6 616.4 324.9 625.9 327.4 619.4 314.9Z"/><path d="M755.1 127.6 745.4 127.4 609.6 312.4 619.4 314.4Z"/><path d="M755.4 127.9 754.1 149.6 829.9 260.6 834.9 248.9Z"/><path d="M755.1 127.9 753.6 149.1Z"/><path d="M816.6 241.9 817.4 242.6 816.1 251.9 821.6 259.6 829.9 260.9ZM753.6 149.4 749.1 155.6 802.9 232.9 811.6 234.6Z"/></g><path d="M344.8 212.6L363.1 210.2M388.3 207.0L409.9 204.3M436.1 201.0L460.5 197.9M487.6 194.4L492.1 193.8M353.7 217.3L356.5 216.9M382.4 213.5L403.9 210.6M430.4 207.1L455.6 203.7M482.6 200.1L510.5 196.4M375.8 220.6L397.3 217.6M424.1 213.8L449.6 210.3M477.0 206.5L506.6 202.4M417.8 221.3L442.9 217.6M470.9 213.5L500.5 209.2M528.3 205.2L540.1 203.4M412.9 229.2L436.1 225.7M464.0 221.4L493.8 216.8M522.3 212.5L540.1 209.7M456.2 230.2L486.2 225.4M514.9 220.8L540.2 216.7M580.0 210.3L593.4 208.1M458.2 238.4L478.3 235.0M507.2 230.1L541.4 224.2M573.0 218.8L614.7 211.7M498.4 240.7L535.2 234.0M565.0 228.6L607.3 220.9M637.3 215.5L641.2 214.8M509.4 248.8L525.5 245.7M555.9 239.8L599.4 231.4M629.7 225.6L667.0 218.4M545.3 252.9L589.6 243.8M620.9 237.3L672.2 226.8M567.6 260.5L578.1 258.2M610.0 251.2L662.9 239.5M694.6 232.5L722.8 226.3" stroke="#5a3a20" stroke-width="1.10" fill="none" stroke-opacity="0.8"/><path d="M344.3 213.1L362.1 210.9M388.0 207.6L409.1 204.9M436.0 201.4L460.5 198.3M487.2 194.9L493.6 194.1M355.3 217.6L356.0 217.5M382.0 214.0L403.7 211.1M430.3 207.6L455.0 204.3M482.1 200.7L511.7 196.7M375.4 221.2L397.0 218.2M424.0 214.4L448.9 210.9M476.5 207.1L506.2 202.9M417.0 222.0L442.8 218.2M470.3 214.2L500.1 209.8M527.6 205.8L539.9 204.0M414.7 229.6L435.3 226.5M463.4 222.1L493.3 217.5M522.0 213.1L539.9 210.3M455.5 231.1L485.7 226.2M514.5 221.5L539.9 217.4M578.9 211.0L595.4 208.4M460.3 238.9L477.7 235.9M506.8 230.9L542.9 224.7M572.4 219.6L614.4 212.4M497.9 241.6L534.3 235.0M564.3 229.5L606.9 221.8M636.6 216.4L643.4 215.1M511.8 249.3L524.4 246.8M555.1 240.9L598.3 232.5M628.9 226.6L669.3 218.8M544.3 254.1L589.0 244.9M619.9 238.5L671.1 227.9M570.3 261.1L577.3 259.5M608.8 252.5L662.2 240.7M694.7 233.5L725.4 226.6" stroke="#e0b080" stroke-width="0.70" fill="none" stroke-opacity="0.8"/></svg>
<svg width="1024" height="578" style="position:absolute;left:0;top:0">
<rect x="53.5" y="64" width="1" height="493" fill="#8e8e8e"/>
<text x="64.5" y="75" font-family="Liberation Sans" font-size="8" fill="#f4f4f4">Perspektive</text>
<g fill="none" stroke="#bdbdbd" stroke-width="1.3"><ellipse cx="978" cy="107.2" rx="37" ry="10.2"/><ellipse cx="978" cy="107.5" rx="30.5" ry="9" stroke-width="1" stroke="#9a9a9a"/></g>
<path d="M958.8 112.2 L982 100.2 L983.4 106.6 L1003.8 106.3 Z" fill="#a8a8a8"/>
<g fill="#dcdcdc"><circle cx="978" cy="97.5" r="1"/><circle cx="978" cy="117" r="1"/><circle cx="953" cy="113.5" r="1.3"/><circle cx="1003" cy="113" r="1.3"/><circle cx="1003" cy="101" r="1.3"/></g>
<path d="M749.5 430.5 L731 423" stroke="#f03a20" stroke-width="2.6"/><path d="M727 421.2 L732.5 420.5 L730.6 425.8Z" fill="#f03a20"/>
<path d="M750 431 V411" stroke="#20e020" stroke-width="2.4"/><path d="M750.3 406 L747.6 412 H753Z" fill="#20e020"/>
<path d="M749.5 432 L737.5 437.5" stroke="#2a7af0" stroke-width="2.6"/><path d="M734 439 L738 434.5 L739.5 439.3Z" fill="#2a7af0"/>
<path d="M97.5 521 V503" stroke="#20c030" stroke-width="1.8"/><path d="M97.5 499.5 L95.3 504.5 H99.7Z" fill="#20c030"/>
<path d="M97 521 L86 516.5" stroke="#e04030" stroke-width="1.8"/><path d="M83 515.5 L87.5 514 L86.5 518.8Z" fill="#e04030"/>
<path d="M97 521.5 L86.5 525.5" stroke="#3070e0" stroke-width="1.8"/><path d="M83.5 526.5 L87.5 523.3 L88.3 527.5Z" fill="#3070e0"/>
<text x="96" y="496" font-family="Liberation Sans" font-size="5" fill="#30c030">z</text>
<text x="77.5" y="517" font-family="Liberation Sans" font-size="5" fill="#c04030">x</text>
<text x="78" y="528" font-family="Liberation Sans" font-size="5" fill="#3060c0">y</text>
<rect x="0" y="576" width="1024" height="2" fill="#9a9a9a"/>
<rect x="72" y="559.5" width="47" height="16.5" fill="#c8c8c8"/>
<rect x="120" y="559.5" width="34" height="16.5" fill="#f0f0f0"/>
<rect x="155" y="559.5" width="17" height="16.5" fill="#f0f0f0"/>
<text x="75.5" y="571.5" font-family="Liberation Sans" font-size="10.2" fill="#e04848" transform="translate(75.5 0) scale(0.95 1) translate(-75.5 0)">Übersicht</text>
<text x="124" y="571.5" font-family="Liberation Sans" font-size="10.2" fill="#222">Szene</text>
<text x="160" y="572" font-family="Liberation Sans" font-size="10" fill="#333">+</text>
<path d="M60.5 564 h4 l1.5 1.5 v6.5 h-5.5z" fill="#4a4a4a" stroke="#555" stroke-width="0.6"/>
<rect x="985.5" y="559" width="18" height="16.5" fill="#6e6e6e" stroke="#4c4c4c" stroke-width="1"/>
<rect x="1004" y="559" width="18.5" height="16.5" fill="#6e6e6e" stroke="#4c4c4c" stroke-width="1"/>
<path d="M994.5 564 V572 M990.5 568 H998.5" stroke="#e8e8e8" stroke-width="1.3"/>
<path d="M1014.79 570.21 1014.67 571.04 1013.30 571.32 1012.99 571.84 1013.39 573.19 1012.71 573.69 1011.54 572.92 1010.95 573.06 1010.29 574.29 1009.46 574.17 1009.18 572.80 1008.66 572.49 1007.31 572.89 1006.81 572.21 1007.58 571.04 1007.44 570.45 1006.21 569.79 1006.33 568.96 1007.70 568.68 1008.01 568.16 1007.61 566.81 1008.29 566.31 1009.46 567.08 1010.05 566.94 1010.71 565.71 1011.54 565.83 1011.82 567.20 1012.34 567.51 1013.69 567.11 1014.19 567.79 1013.42 568.96 1013.56 569.55Z" fill="#dedede"/><circle cx="1010.50" cy="570.00" r="1.94" fill="#6e6e6e"/><path d="M1020.00 565.97 1019.88 566.63 1018.89 566.84 1018.61 567.24 1018.74 568.25 1018.15 568.57 1017.36 567.93 1016.88 567.96 1016.17 568.68 1015.55 568.43 1015.56 567.41 1015.24 567.05 1014.23 566.95 1014.04 566.30 1014.84 565.68 1014.92 565.20 1014.37 564.35 1014.76 563.80 1015.75 564.04 1016.17 563.80 1016.50 562.84 1017.17 562.80 1017.60 563.72 1018.04 563.91 1019.00 563.56 1019.45 564.06 1019.00 564.97 1019.13 565.44Z" fill="#dedede"/><circle cx="1017.00" cy="565.80" r="1.35" fill="#6e6e6e"/>
</svg>
</body></html>
